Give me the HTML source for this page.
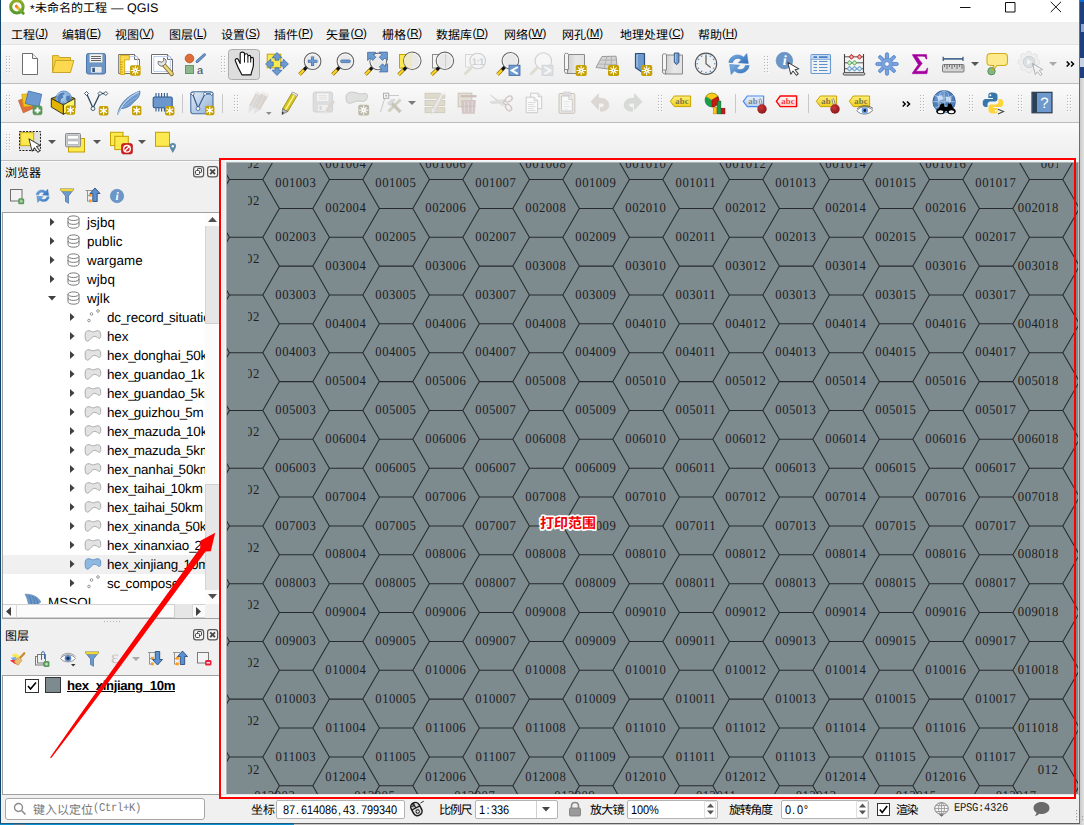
<!DOCTYPE html>
<html lang="zh"><head><meta charset="utf-8"><title>*未命名的工程 — QGIS</title>
<style>
html,body{margin:0;padding:0}
body{width:1084px;height:825px;overflow:hidden;position:relative;background:#f0f0f0;font-family:"Liberation Sans",sans-serif;text-rendering:geometricPrecision}
.a{position:absolute;box-sizing:border-box}
svg{overflow:visible}
.tb{left:1px;width:1078px;height:38px;background:linear-gradient(#fbfbfb,#f4f4f4 40%,#eeeeee)}
.ln{left:1px;width:1078px;height:2px;background:linear-gradient(#bdbdbd 1px,#f9f9f9 1px)}
.grip{width:4px;height:18px;background-image:radial-gradient(circle at 1px 1px,#b4b4b4 0.8px,transparent 1px);background-size:3px 3px}
.ss span{display:inline-block;width:6px;text-align:center}
u{text-decoration:underline;text-underline-offset:1px}
.cj{font-family:"Liberation Sans","Noto Sans CJK SC",sans-serif}
</style></head><body>

<div class="a" style="left:0px;top:0px;width:1px;height:825px;background:#14466d"></div>
<div class="a" style="left:0px;top:823px;width:1084px;height:2px;background:linear-gradient(#1c5c82 1px,#0a8fd0 1px)"></div>
<div class="a" style="left:294px;top:823px;width:786px;height:2px;background:linear-gradient(#5e5e5e 1px,#c6c6c6 1px)"></div>
<div class="a" style="left:13px;top:824px;width:12px;height:1px;background:#5a7a94"></div>
<div class="a" style="left:1080px;top:0px;width:4px;height:825px;background:linear-gradient(90deg,#cbcbcb,#e2e2e2)"></div>
<div class="a" style="left:1079px;top:0px;width:5px;height:78px;background:#1d3f7b"></div>
<div class="a" style="left:1079px;top:0px;width:5px;height:2px;background:#0f6ad2"></div>
<div class="a" style="left:1081px;top:24px;width:3px;height:8px;background:#8fa4c8"></div>
<div class="a" style="left:1080px;top:58px;width:4px;height:9px;background:#c8d2e4"></div>
<div class="a" style="left:1px;top:0px;width:1078px;height:823px;background:#f0f0f0"></div>
<div class="a" style="left:1px;top:0px;width:1078px;height:22px;background:#fff"></div>
<svg class="a" style="left:8px;top:-2px" width="18" height="18" viewBox="0 0 18 18"><defs><linearGradient id="qg" x1="0" y1="0" x2="0" y2="1"><stop offset="0" stop-color="#90ad28"/><stop offset="1" stop-color="#569a2e"/></linearGradient><linearGradient id="qt" x1="0" y1="0" x2="1" y2="1"><stop offset="0" stop-color="#f47a1a"/><stop offset=".35" stop-color="#f4c430"/><stop offset=".5" stop-color="#8ab82e"/><stop offset="1" stop-color="#4f962c"/></linearGradient></defs><circle cx="8.900" cy="8.800" r="6.200" fill="none" stroke="url(#qg)" stroke-width="3.100"/><path d="M8.300 8.200L15.200 15.200" stroke="url(#qt)" stroke-width="3" stroke-linecap="round"/></svg>
<div class="a" style="left:30px;top:0.50px;font:12px/17px 'Liberation Sans',sans-serif;color:#000;white-space:nowrap;letter-spacing:0px;">*</div>
<svg class="a" style="left:34.60px;top:-0.64px" width="74" height="16.6" viewBox="0 -12.80 74 16.6"><text class="cj" x="0" y="0" font-size="12" fill="#000">未命名的工程</text></svg>
<div class="a" style="left:111px;top:-1.00px;font:12.5px/18px 'Liberation Sans',sans-serif;color:#000;white-space:nowrap;letter-spacing:0px;">— QGIS</div>
<svg class="a" style="left:950px;top:0" width="120" height="22"><path d="M10 7.500H20.500 M55.500 2.500h9.500v9.500h-9.500z M100.700 1.800l10.300 10.300M111 1.800L100.700 12.100" stroke="#111" stroke-width="1" fill="none"/></svg>
<svg class="a" style="left:10.60px;top:25.96px" width="26" height="16.6" viewBox="0 -12.80 26 16.6"><text class="cj" x="0" y="0" font-size="12" fill="#000">工程</text></svg>
<div class="a" style="left:35.0px;top:26.30px;font:11.6px/16px 'Liberation Sans',sans-serif;color:#000;white-space:nowrap;letter-spacing:-0.2px;">(<u>J</u>)</div>
<svg class="a" style="left:61.60px;top:25.96px" width="26" height="16.6" viewBox="0 -12.80 26 16.6"><text class="cj" x="0" y="0" font-size="12" fill="#000">编辑</text></svg>
<div class="a" style="left:86.0px;top:26.30px;font:11.6px/16px 'Liberation Sans',sans-serif;color:#000;white-space:nowrap;letter-spacing:-0.2px;">(<u>E</u>)</div>
<svg class="a" style="left:114.60px;top:25.96px" width="26" height="16.6" viewBox="0 -12.80 26 16.6"><text class="cj" x="0" y="0" font-size="12" fill="#000">视图</text></svg>
<div class="a" style="left:139.0px;top:26.30px;font:11.6px/16px 'Liberation Sans',sans-serif;color:#000;white-space:nowrap;letter-spacing:-0.2px;">(<u>V</u>)</div>
<svg class="a" style="left:168.60px;top:25.96px" width="26" height="16.6" viewBox="0 -12.80 26 16.6"><text class="cj" x="0" y="0" font-size="12" fill="#000">图层</text></svg>
<div class="a" style="left:193.0px;top:26.30px;font:11.6px/16px 'Liberation Sans',sans-serif;color:#000;white-space:nowrap;letter-spacing:-0.2px;">(<u>L</u>)</div>
<svg class="a" style="left:220.60px;top:25.96px" width="26" height="16.6" viewBox="0 -12.80 26 16.6"><text class="cj" x="0" y="0" font-size="12" fill="#000">设置</text></svg>
<div class="a" style="left:245.0px;top:26.30px;font:11.6px/16px 'Liberation Sans',sans-serif;color:#000;white-space:nowrap;letter-spacing:-0.2px;">(<u>S</u>)</div>
<svg class="a" style="left:273.60px;top:25.96px" width="26" height="16.6" viewBox="0 -12.80 26 16.6"><text class="cj" x="0" y="0" font-size="12" fill="#000">插件</text></svg>
<div class="a" style="left:298.0px;top:26.30px;font:11.6px/16px 'Liberation Sans',sans-serif;color:#000;white-space:nowrap;letter-spacing:-0.2px;">(<u>P</u>)</div>
<svg class="a" style="left:326.10px;top:25.96px" width="26" height="16.6" viewBox="0 -12.80 26 16.6"><text class="cj" x="0" y="0" font-size="12" fill="#000">矢量</text></svg>
<div class="a" style="left:350.5px;top:26.30px;font:11.6px/16px 'Liberation Sans',sans-serif;color:#000;white-space:nowrap;letter-spacing:-0.2px;">(<u>O</u>)</div>
<svg class="a" style="left:382.10px;top:25.96px" width="26" height="16.6" viewBox="0 -12.80 26 16.6"><text class="cj" x="0" y="0" font-size="12" fill="#000">栅格</text></svg>
<div class="a" style="left:406.5px;top:26.30px;font:11.6px/16px 'Liberation Sans',sans-serif;color:#000;white-space:nowrap;letter-spacing:-0.2px;">(<u>R</u>)</div>
<svg class="a" style="left:436.10px;top:25.96px" width="38" height="16.6" viewBox="0 -12.80 38 16.6"><text class="cj" x="0" y="0" font-size="12" fill="#000">数据库</text></svg>
<div class="a" style="left:472.5px;top:26.30px;font:11.6px/16px 'Liberation Sans',sans-serif;color:#000;white-space:nowrap;letter-spacing:-0.2px;">(<u>D</u>)</div>
<svg class="a" style="left:503.60px;top:25.96px" width="26" height="16.6" viewBox="0 -12.80 26 16.6"><text class="cj" x="0" y="0" font-size="12" fill="#000">网络</text></svg>
<div class="a" style="left:528.0px;top:26.30px;font:11.6px/16px 'Liberation Sans',sans-serif;color:#000;white-space:nowrap;letter-spacing:-0.2px;">(<u>W</u>)</div>
<svg class="a" style="left:561.60px;top:25.96px" width="26" height="16.6" viewBox="0 -12.80 26 16.6"><text class="cj" x="0" y="0" font-size="12" fill="#000">网孔</text></svg>
<div class="a" style="left:586.0px;top:26.30px;font:11.6px/16px 'Liberation Sans',sans-serif;color:#000;white-space:nowrap;letter-spacing:-0.2px;">(<u>M</u>)</div>
<svg class="a" style="left:620.10px;top:25.96px" width="50" height="16.6" viewBox="0 -12.80 50 16.6"><text class="cj" x="0" y="0" font-size="12" fill="#000">地理处理</text></svg>
<div class="a" style="left:668.5px;top:26.30px;font:11.6px/16px 'Liberation Sans',sans-serif;color:#000;white-space:nowrap;letter-spacing:-0.2px;">(<u>C</u>)</div>
<svg class="a" style="left:697.60px;top:25.96px" width="26" height="16.6" viewBox="0 -12.80 26 16.6"><text class="cj" x="0" y="0" font-size="12" fill="#000">帮助</text></svg>
<div class="a" style="left:722.0px;top:26.30px;font:11.6px/16px 'Liberation Sans',sans-serif;color:#000;white-space:nowrap;letter-spacing:-0.2px;">(<u>H</u>)</div>
<div class="a" style="left:1px;top:44px;width:1078px;height:1px;background:#e2e2e2"></div>
<div class="a tb" style="top:45px;height:38px"></div>
<div class="a tb" style="top:84px;height:38px"></div>
<div class="a tb" style="top:123px;height:37px"></div>
<div class="a ln" style="top:83px"></div>
<div class="a ln" style="top:122px"></div>
<div class="a ln" style="top:160px"></div>
<svg class="a" style="left:6px;top:56px" width="5" height="19"><path d="M1 1h1v1h-1zM1 4h1v1h-1zM1 7h1v1h-1zM1 10h1v1h-1zM1 13h1v1h-1zM1 16h1v1h-1zM4 1h1v1h-1zM4 4h1v1h-1zM4 7h1v1h-1zM4 10h1v1h-1zM4 13h1v1h-1zM4 16h1v1h-1z" fill="#fff"/><path d="M0 0h1v1h-1zM0 3h1v1h-1zM0 6h1v1h-1zM0 9h1v1h-1zM0 12h1v1h-1zM0 15h1v1h-1zM3 0h1v1h-1zM3 3h1v1h-1zM3 6h1v1h-1zM3 9h1v1h-1zM3 12h1v1h-1zM3 15h1v1h-1z" fill="#b6b6b6"/></svg>
<svg class="a" style="left:18px;top:52px" width="24" height="24" viewBox="0 0 24 24"><path d="M4.500 1.500H14.500L19.500 6.500V22.500H4.500Z" fill="#fff" stroke="#6e6e6e"/><path d="M14.500 1.500V6.500H19.500" fill="#f0f0f0" stroke="#6e6e6e"/></svg>
<svg class="a" style="left:51px;top:52px" width="24" height="24" viewBox="0 0 24 24"><path d="M1.500 20.500V3.600H7.500L8.500 5.500H19.500V8.500" fill="#f5cf3e" stroke="#c9a52a"/><path d="M1.500 20.500L4.500 8.500H22.800L19.500 20.500Z" fill="#fdd94f" stroke="#c9a52a"/></svg>
<svg class="a" style="left:84px;top:52px" width="24" height="24" viewBox="0 0 24 24"><rect x="2.500" y="1.500" width="19" height="20.500" rx="2" fill="#6c96c8" stroke="#4a74a8"/><rect x="5.500" y="2" width="13" height="8.500" fill="#f2f2f2" stroke="#9ab" stroke-width=".5"/><path d="M7 4.500H17M7 6.500H17M7 8.500H17" stroke="#555" stroke-width=".9"/><rect x="6.500" y="14.500" width="11.500" height="6.500" fill="#e8e8e8" stroke="#5580b5" stroke-width=".6"/><rect x="8.300" y="15.800" width="2.600" height="4.200" fill="#2f5487"/></svg>
<svg class="a" style="left:117px;top:52px" width="24" height="24" viewBox="0 0 24 24"><path d="M1.700 2.500H17.500L22.500 7.500V21.500H1.700Z" fill="#fff" stroke="#6e6e6e"/><path d="M17.500 2.500V7.500H22.500" fill="#f4f4f4" stroke="#6e6e6e"/><rect x="4" y="4.500" width="16.500" height="15" fill="none" stroke="#b8c8f0" stroke-width=".8"/><path d="M3.200 3.300H12.300V7.800H7.700V22.500H3.200Z" fill="#fcd94f" stroke="#d1a800" stroke-width=".9"/><path d="M3.500 10h2.500M3.500 12.500h1.700M3.500 15h2.500M3.500 17.500h1.700M3.500 20h2.500" stroke="#b89400" stroke-width=".8"/><rect x="13" y="13.2" width="10.600" height="10.600" rx="1.800" fill="#c4a000"/><path d="M18.30 18.50L22.50 18.50M18.30 18.50L18.30 22.70M18.30 18.50L14.10 18.50M18.30 18.50L18.30 14.30" stroke="#fff" stroke-width="1" stroke-linecap="round"/><path d="M18.30 18.50L20.85 21.05M18.30 18.50L15.75 21.05M18.30 18.50L15.75 15.95M18.30 18.50L20.85 15.95" stroke="#fff" stroke-width="1.100" stroke-linecap="round"/><circle cx="18.3" cy="18.5" r="2" fill="#fff"/><circle cx="18.3" cy="18.5" r=".7" fill="#c4a000"/></svg>
<svg class="a" style="left:150px;top:52px" width="24" height="24" viewBox="0 0 24 24"><path d="M1.500 2.500H17.500L22.500 7.500V21.500H1.500Z" fill="#fff" stroke="#6e6e6e"/><path d="M17.500 2.500V7.500H22.500" fill="#f4f4f4" stroke="#6e6e6e"/><rect x="3.800" y="4.500" width="16.500" height="15" fill="none" stroke="#b8c8f0" stroke-width=".9"/><path d="M13.500 12.500L21.800 22" stroke="#8a7430" stroke-width="4.200" stroke-linecap="round"/><path d="M14 13L21.600 21.700" stroke="#ecd67c" stroke-width="2.600" stroke-linecap="round"/><path d="M8.300 9.200a3.600 3.600 0 0 0 5.800 4l1.600-1.800a3.600 3.600 0 0 0-2.200-5.400l.3 2.600-2 1.600-2.200-.6Z" fill="#e4e4e4" stroke="#666" stroke-width=".9"/></svg>
<svg class="a" style="left:183px;top:52px" width="24" height="24" viewBox="0 0 24 24"><circle cx="6.500" cy="6.500" r="4.300" fill="#df6d3a" stroke="#b0501f" stroke-width=".8"/><path d="M14 9.600L21.500 2.800" stroke="#41699b" stroke-width="2.800" stroke-linecap="round"/><path d="M14 9.600L21.500 2.800" stroke="#6d9bd1" stroke-width="1.500" stroke-linecap="round"/><rect x="2.500" y="13.500" width="8" height="8" fill="#8fb78f" stroke="#5f9a5f"/><text x="14" y="21.700" font-family="'Liberation Sans',sans-serif" font-size="11" fill="#444">a</text></svg>
<svg class="a" style="left:221px;top:56px" width="5" height="19"><path d="M1 1h1v1h-1zM1 4h1v1h-1zM1 7h1v1h-1zM1 10h1v1h-1zM1 13h1v1h-1zM1 16h1v1h-1zM4 1h1v1h-1zM4 4h1v1h-1zM4 7h1v1h-1zM4 10h1v1h-1zM4 13h1v1h-1zM4 16h1v1h-1z" fill="#fff"/><path d="M0 0h1v1h-1zM0 3h1v1h-1zM0 6h1v1h-1zM0 9h1v1h-1zM0 12h1v1h-1zM0 15h1v1h-1zM3 0h1v1h-1zM3 3h1v1h-1zM3 6h1v1h-1zM3 9h1v1h-1zM3 12h1v1h-1zM3 15h1v1h-1z" fill="#b6b6b6"/></svg>
<div class="a" style="left:228px;top:49px;width:32px;height:31px;background:#dddddd;border:1px solid #adadad;border-radius:3.500px"></div>
<svg class="a" style="left:232px;top:52px" width="24" height="24" viewBox="0 0 24 24"><path d="M9.900 22.800H19C19.500 19 21.400 16 21.400 13V6.800C21.400 4.900 18.700 4.900 18.700 6.800V5C18.700 2.800 15.900 2.800 15.900 4.800V3.400C15.900 1.200 12.500 1.200 12.500 3.400V1.800C12.500 -.4 8.200 -.4 8.200 1.800V11.500L6.300 7.800C5.300 5.800 2.500 6.800 3.400 9 5 13.500 7.500 18.500 9.900 22.800Z" fill="#fff" stroke="#111" stroke-width="1.150" stroke-linejoin="round"/><path d="M12.500 3.400V10.500M15.900 4.800V10.800M18.700 6.800V10.500" stroke="#111" stroke-width="1"/></svg>
<svg class="a" style="left:265px;top:52px" width="24" height="24" viewBox="0 0 24 24"><rect x="2.200" y="2.200" width="13.600" height="13.600" fill="#fce94f" stroke="#c9a300"/><path transform="rotate(0 12 12)" d="M12 .6L17 5.800H14V8.200H10V5.800H7Z" fill="#6d9bd1" stroke="#3f6ea8" stroke-width=".8" stroke-linejoin="round"/><path transform="rotate(90 12 12)" d="M12 .6L17 5.800H14V8.200H10V5.800H7Z" fill="#6d9bd1" stroke="#3f6ea8" stroke-width=".8" stroke-linejoin="round"/><path transform="rotate(180 12 12)" d="M12 .6L17 5.800H14V8.200H10V5.800H7Z" fill="#6d9bd1" stroke="#3f6ea8" stroke-width=".8" stroke-linejoin="round"/><path transform="rotate(270 12 12)" d="M12 .6L17 5.800H14V8.200H10V5.800H7Z" fill="#6d9bd1" stroke="#3f6ea8" stroke-width=".8" stroke-linejoin="round"/></svg>
<svg class="a" style="left:298px;top:52px" width="24" height="24" viewBox="0 0 24 24"><path d="M6.900 16.900L1.500 22.500" stroke="#8d6e00" stroke-width="3.600"/><path d="M6.900 16.900L1.500 22.500" stroke="#fcd42b" stroke-width="2.200"/><path d="M8.300 15.500L6.900 16.900" stroke="#111" stroke-width="3.200" stroke-linecap="round"/><circle cx="14.6" cy="9.2" r="8.3" fill="#e9e9e9" stroke="#666" stroke-width="1.100"/><circle cx="14.6" cy="9.2" r="7.1000000000000005" fill="none" stroke="#fff" stroke-width=".9" opacity=".75"/><path d="M14.600 4.500V14M9.800 9.200H19.400" stroke="#3f6ea8" stroke-width="3"/><path d="M14.600 5V13.500M10.300 9.200H18.900" stroke="#6d9bd1" stroke-width="1.800"/></svg>
<svg class="a" style="left:331px;top:52px" width="24" height="24" viewBox="0 0 24 24"><path d="M6.900 16.900L1.500 22.500" stroke="#8d6e00" stroke-width="3.600"/><path d="M6.900 16.900L1.500 22.500" stroke="#fcd42b" stroke-width="2.200"/><path d="M8.300 15.500L6.900 16.900" stroke="#111" stroke-width="3.200" stroke-linecap="round"/><circle cx="14.4" cy="9.2" r="8.3" fill="#e9e9e9" stroke="#666" stroke-width="1.100"/><circle cx="14.4" cy="9.2" r="7.1000000000000005" fill="none" stroke="#fff" stroke-width=".9" opacity=".75"/><rect x="9.700" y="8" width="9.600" height="2.600" rx="1" fill="#6d9bd1" stroke="#3f6ea8" stroke-width=".8"/></svg>
<svg class="a" style="left:364px;top:52px" width="24" height="24" viewBox="0 0 24 24"><path d="M6.900 16.900L1.500 22.500" stroke="#8d6e00" stroke-width="3.600"/><path d="M6.900 16.900L1.500 22.500" stroke="#fcd42b" stroke-width="2.200"/><path d="M8.300 15.500L6.900 16.900" stroke="#111" stroke-width="3.200" stroke-linecap="round"/><circle cx="14.2" cy="9.4" r="8.3" fill="#e9e9e9" stroke="#666" stroke-width="1.100"/><circle cx="14.2" cy="9.4" r="7.1000000000000005" fill="none" stroke="#fff" stroke-width=".9" opacity=".75"/><path transform="rotate(0 13.600 10.100)" d="M3.600 .3H11.800L9.400 2.700 11.900 5.200 8.700 8.400 6.200 5.900 3.600 8.500Z" fill="#6d9bd1" stroke="#3f6ea8" stroke-width=".8" stroke-linejoin="round"/><path transform="rotate(90 13.600 10.100)" d="M3.600 .3H11.800L9.400 2.700 11.900 5.200 8.700 8.400 6.200 5.900 3.600 8.500Z" fill="#6d9bd1" stroke="#3f6ea8" stroke-width=".8" stroke-linejoin="round"/><path transform="rotate(180 13.600 10.100)" d="M3.600 .3H11.800L9.400 2.700 11.900 5.200 8.700 8.400 6.200 5.900 3.600 8.500Z" fill="#6d9bd1" stroke="#3f6ea8" stroke-width=".8" stroke-linejoin="round"/></svg>
<svg class="a" style="left:397px;top:52px" width="24" height="24" viewBox="0 0 24 24"><rect x="2.500" y="2.500" width="8" height="13.500" fill="#fce94f" stroke="#c9a300"/><path d="M7.500 17.0L1.500 22.800" stroke="#8d6e00" stroke-width="3.600"/><path d="M7.500 17.0L1.500 22.800" stroke="#fcd42b" stroke-width="2.200"/><path d="M9 15.600L7.500 17.0" stroke="#111" stroke-width="3.200" stroke-linecap="round"/><circle cx="15.3" cy="8.8" r="8.7" fill="#e9e9e9" stroke="#666" stroke-width="1.100"/><circle cx="15.3" cy="8.8" r="7.499999999999999" fill="none" stroke="#fff" stroke-width=".9" opacity=".75"/><path d="M15.300 .5A8.300 8.300 0 0 0 15.300 17.100Z" fill="#eee8c4" opacity=".85"/></svg>
<svg class="a" style="left:430px;top:52px" width="24" height="24" viewBox="0 0 24 24"><rect x="2.500" y="2.500" width="8" height="13.500" fill="#f4f4f4" stroke="#8a8a8a"/><path d="M7.500 17.0L1.500 22.800" stroke="#8d6e00" stroke-width="3.600"/><path d="M7.500 17.0L1.500 22.800" stroke="#fcd42b" stroke-width="2.200"/><path d="M9 15.600L7.500 17.0" stroke="#111" stroke-width="3.200" stroke-linecap="round"/><circle cx="14.9" cy="8.8" r="8.7" fill="#e9e9e9" stroke="#666" stroke-width="1.100"/><circle cx="14.9" cy="8.8" r="7.499999999999999" fill="none" stroke="#fff" stroke-width=".9" opacity=".75"/><path d="M15.600 1.500V16" stroke="#c4c4c4" stroke-width=".8"/></svg>
<svg class="a" style="left:463px;top:52px" width="24" height="24" viewBox="0 0 24 24"><rect x="2.500" y="2.500" width="8" height="12.500" fill="#f6f6f6" stroke="#d8d8d8"/><path d="M8.500 15.600L1.500 22.500" stroke="#dddbd2" stroke-width="3"/><circle cx="14.7" cy="9" r="7.8" fill="#f4f4f4" stroke="#cfcfcf" stroke-width="1.100"/><text x="14.700" y="12.600" text-anchor="middle" font-family="'Liberation Sans',sans-serif" font-weight="bold" font-size="9.500" fill="#d0d0d0" letter-spacing="-.6">1:1</text></svg>
<svg class="a" style="left:496px;top:52px" width="24" height="24" viewBox="0 0 24 24"><path d="M6.900 16.900L1.500 22.500" stroke="#8d6e00" stroke-width="3.600"/><path d="M6.900 16.900L1.500 22.500" stroke="#fcd42b" stroke-width="2.200"/><path d="M8.300 15.500L6.900 16.900" stroke="#111" stroke-width="3.200" stroke-linecap="round"/><circle cx="14.4" cy="8.8" r="8.3" fill="#e9e9e9" stroke="#666" stroke-width="1.100"/><circle cx="14.4" cy="8.8" r="7.1000000000000005" fill="none" stroke="#fff" stroke-width=".9" opacity=".75"/><rect x="13" y="13.200" width="11" height="10.300" fill="#6d9bd1" stroke="#41699b" stroke-width=".8"/><path d="M21.800 15L15.800 18.400 21.800 21.800" fill="none" stroke="#fff" stroke-width="2"/></svg>
<svg class="a" style="left:529px;top:52px" width="24" height="24" viewBox="0 0 24 24"><path d="M8.300 15.500L1.500 22.500" stroke="#dddbd2" stroke-width="3"/><circle cx="14.3" cy="9" r="8.2" fill="#f6f6f6" stroke="#cfcfcf" stroke-width="1.100"/><rect x="13" y="13.200" width="11" height="10.300" fill="#dcdfe2" stroke="#cfd2d4" stroke-width=".8"/><path d="M15.500 15L21.500 18.400 15.500 21.800" fill="none" stroke="#f6f6f6" stroke-width="2"/></svg>
<svg width="0" height="0" style="position:absolute"><defs><linearGradient id="gp" x1="0" x2="1" y1="0" y2="0"><stop offset="0" stop-color="#cfcfcf"/><stop offset=".5" stop-color="#e8e8e8"/><stop offset="1" stop-color="#e2e2e2"/></linearGradient><linearGradient id="gy" x1="0" x2="0" y1="0" y2="1"><stop offset="0" stop-color="#fdf07a"/><stop offset="1" stop-color="#f0cf1a"/></linearGradient><linearGradient id="gb" x1="0" x2="0" y1="0" y2="1"><stop offset="0" stop-color="#eaf2fc"/><stop offset="1" stop-color="#b8d0f0"/></linearGradient><linearGradient id="gr" x1="0" x2="0" y1="0" y2="1"><stop offset="0" stop-color="#fff"/><stop offset="1" stop-color="#ffc8c8"/></linearGradient><linearGradient id="gv" x1="0" x2="1" y1="0" y2="1"><stop offset="0" stop-color="#e4ecf6"/><stop offset="1" stop-color="#8fb0d8"/></linearGradient><radialGradient id="gball" cx=".4" cy=".35" r=".7"><stop offset="0" stop-color="#c83a3a"/><stop offset="1" stop-color="#8a1414"/></radialGradient><linearGradient id="grf" x1="0" x2="1" y1="0" y2="1"><stop offset="0" stop-color="#7fb0e4"/><stop offset="1" stop-color="#2f6db8"/></linearGradient></defs></svg>
<svg class="a" style="left:563px;top:52px" width="24" height="24" viewBox="0 0 24 24"><path d="M4.500 2.500H21.500V21.500H4.500Z" fill="url(#gp)" stroke="#8a8a8a"/><path d="M1.500 2.500C1.500 .8 5.500 .8 5.500 2.500V17.500H1.500Z" fill="#f4f4f4" stroke="#8a8a8a"/><path d="M1.500 17.500V19.500C1.500 21.300 4 21.500 5.500 21.500" fill="none" stroke="#8a8a8a"/><rect x="12.7" y="13" width="11" height="11" rx="1.800" fill="#c4a000"/><path d="M18.20 18.50L22.60 18.50M18.20 18.50L18.20 22.90M18.20 18.50L13.80 18.50M18.20 18.50L18.20 14.10" stroke="#fff" stroke-width="1" stroke-linecap="round"/><path d="M18.20 18.50L20.89 21.19M18.20 18.50L15.51 21.19M18.20 18.50L15.51 15.81M18.20 18.50L20.89 15.81" stroke="#fff" stroke-width="1.100" stroke-linecap="round"/><circle cx="18.2" cy="18.5" r="2" fill="#fff"/><circle cx="18.2" cy="18.5" r=".7" fill="#c4a000"/></svg>
<svg class="a" style="left:595px;top:52px" width="24" height="24" viewBox="0 0 24 24"><path d="M7 4.500L21 4.200 22.500 18 1 15.500Z" fill="#d4d4d4" stroke="#9a9a9a"/><path d="M12 4.400L9 16.400M16.500 4.300L16 17.200M4.800 8.200L21.400 8M3 12L22 12.600" stroke="#a8a8a8" stroke-width=".8"/><rect x="13" y="13" width="11" height="11" rx="1.800" fill="#c4a000"/><path d="M18.50 18.50L22.90 18.50M18.50 18.50L18.50 22.90M18.50 18.50L14.10 18.50M18.50 18.50L18.50 14.10" stroke="#fff" stroke-width="1" stroke-linecap="round"/><path d="M18.50 18.50L21.19 21.19M18.50 18.50L15.81 21.19M18.50 18.50L15.81 15.81M18.50 18.50L21.19 15.81" stroke="#fff" stroke-width="1.100" stroke-linecap="round"/><circle cx="18.5" cy="18.5" r="2" fill="#fff"/><circle cx="18.5" cy="18.5" r=".7" fill="#c4a000"/></svg>
<svg class="a" style="left:628px;top:52px" width="24" height="24" viewBox="0 0 24 24"><path d="M7.500 1.500H16.500V21.800L7.500 15.800Z" fill="#6d99cc" stroke="#2d4f7c" stroke-width="1.200" stroke-linejoin="round"/><path d="M9 2.500V15" stroke="#a8c8ec" stroke-width="1.200"/><rect x="13.2" y="13" width="11" height="11" rx="1.800" fill="#c4a000"/><path d="M18.70 18.50L23.10 18.50M18.70 18.50L18.70 22.90M18.70 18.50L14.30 18.50M18.70 18.50L18.70 14.10" stroke="#fff" stroke-width="1" stroke-linecap="round"/><path d="M18.70 18.50L21.39 21.19M18.70 18.50L16.01 21.19M18.70 18.50L16.01 15.81M18.70 18.50L21.39 15.81" stroke="#fff" stroke-width="1.100" stroke-linecap="round"/><circle cx="18.7" cy="18.5" r="2" fill="#fff"/><circle cx="18.7" cy="18.5" r=".7" fill="#c4a000"/></svg>
<svg class="a" style="left:661px;top:52px" width="24" height="24" viewBox="0 0 24 24"><g transform="translate(0,.5)"><path d="M4.500 2.500H21.500V21.500H4.500Z" fill="url(#gp)" stroke="#8a8a8a"/><path d="M1.500 2.500C1.500 .8 5.500 .8 5.500 2.500V17.500H1.500Z" fill="#f4f4f4" stroke="#8a8a8a"/><path d="M1.500 17.500V19.500C1.500 21.300 4 21.500 5.500 21.500" fill="none" stroke="#8a8a8a"/></g><path d="M13.300 1V10.500L15.600 12.600 17.900 10.500V1Z" fill="#6d99cc" stroke="#2d4f7c" stroke-width=".9"/><path d="M14.700 1.800V10" stroke="#b0ccec" stroke-width="1"/></svg>
<svg class="a" style="left:694px;top:52px" width="24" height="24" viewBox="0 0 24 24"><circle cx="12" cy="11.800" r="10.700" fill="#f0f0f0" stroke="#555" stroke-width="1.100"/><circle cx="20.80" cy="11.80" r=".8" fill="#5a8fd0"/><circle cx="19.62" cy="16.20" r=".8" fill="#5a8fd0"/><circle cx="16.40" cy="19.42" r=".8" fill="#5a8fd0"/><circle cx="12.00" cy="20.60" r=".8" fill="#5a8fd0"/><circle cx="7.60" cy="19.42" r=".8" fill="#5a8fd0"/><circle cx="4.38" cy="16.20" r=".8" fill="#5a8fd0"/><circle cx="3.20" cy="11.80" r=".8" fill="#5a8fd0"/><circle cx="4.38" cy="7.40" r=".8" fill="#5a8fd0"/><circle cx="7.60" cy="4.18" r=".8" fill="#5a8fd0"/><circle cx="12.00" cy="3.00" r=".8" fill="#5a8fd0"/><circle cx="16.40" cy="4.18" r=".8" fill="#5a8fd0"/><circle cx="19.62" cy="7.40" r=".8" fill="#5a8fd0"/><path d="M12 3.500V11.800L16.600 15.600" fill="none" stroke="#666" stroke-width="1.300"/></svg>
<svg class="a" style="left:727px;top:52px" width="24" height="24" viewBox="0 0 24 24"><path d="M1.800 10.500C2.500 3.500 11.500 .5 16.500 5.200L19.800 1.500 21.300 11.500 11.300 10.800 14.300 7.800C11 4.800 6 7 5.800 10.500Z" fill="url(#grf)" stroke="#3a78c0" stroke-width=".5"/><path d="M22.200 13.500C21.500 20.500 12.500 23.500 7.500 18.800L4.200 22.500 2.700 12.500 12.700 13.200 9.700 16.200C13 19.200 18 17 18.200 13.500Z" fill="url(#grf)" stroke="#3a78c0" stroke-width=".5"/></svg>
<svg class="a" style="left:764px;top:56px" width="5" height="19"><path d="M1 1h1v1h-1zM1 4h1v1h-1zM1 7h1v1h-1zM1 10h1v1h-1zM1 13h1v1h-1zM1 16h1v1h-1zM4 1h1v1h-1zM4 4h1v1h-1zM4 7h1v1h-1zM4 10h1v1h-1zM4 13h1v1h-1zM4 16h1v1h-1z" fill="#fff"/><path d="M0 0h1v1h-1zM0 3h1v1h-1zM0 6h1v1h-1zM0 9h1v1h-1zM0 12h1v1h-1zM0 15h1v1h-1zM3 0h1v1h-1zM3 3h1v1h-1zM3 6h1v1h-1zM3 9h1v1h-1zM3 12h1v1h-1zM3 15h1v1h-1z" fill="#b6b6b6"/></svg>
<svg class="a" style="left:776px;top:52px" width="24" height="24" viewBox="0 0 24 24"><circle cx="8.400" cy="8.600" r="8.300" fill="#6b96c8" stroke="#5a86b8" stroke-width=".6"/><text x="8.600" y="13.300" text-anchor="middle" font-family="'Liberation Serif',serif" font-style="italic" font-weight="bold" font-size="14" fill="#fff">i</text><g transform="translate(11.800,10.300) rotate(-14) scale(.92)"><path d="M0 0V13.500L3.200 10.600 5.600 16 8 15 5.600 9.800H10Z" fill="#fff" stroke="#333" stroke-width="1" stroke-linejoin="round"/></g></svg>
<svg class="a" style="left:809px;top:52px" width="24" height="24" viewBox="0 0 24 24"><rect x="2" y="2.500" width="19.500" height="19" rx="1" fill="#f2f2f2" stroke="#6a9ad4" stroke-width="1.100"/><rect x="2.500" y="3" width="18.500" height="4.200" fill="#c5dbf2"/><path d="M4.500 5.200H8M10 5.200H18.500" stroke="#4a7fc0" stroke-width="1.700"/><path d="M2 7.400H21.500" stroke="#6a9ad4" stroke-width=".8"/><path d="M4.500 9.500H8M10 9.500H18.500" stroke="#5a8fd0" stroke-width="1.200"/><path d="M4.500 12.500H8M10 12.500H18.500" stroke="#5a8fd0" stroke-width="1.200"/><path d="M4.500 15.500H8M10 15.500H18.500" stroke="#5a8fd0" stroke-width="1.200"/><path d="M4.500 18.500H8M10 18.500H18.500" stroke="#5a8fd0" stroke-width="1.200"/></svg>
<svg class="a" style="left:842px;top:52px" width="24" height="24" viewBox="0 0 24 24"><path d="M2.500 2V21M21.500 2V21" stroke="#444" stroke-width="1.100"/><path d="M2.500 4.800H21.500M2.500 10.800H21.500M2.500 16.700H21.500" stroke="#444" stroke-width=".9"/><rect x="1.200" y="20.700" width="21.600" height="2.300" rx="1" fill="#e8e8e8" stroke="#444"/><path d="M9.500 2.300L12.0 4.800L9.500 7.300L7.0 4.800Z" fill="#e06a6a" stroke="#c02020" stroke-width=".8"/><circle cx="9.5" cy="4.8" r=".9" fill="#fff" opacity=".7"/><path d="M17.500 2.300L20.0 4.800L17.500 7.300L15.0 4.800Z" fill="#e06a6a" stroke="#c02020" stroke-width=".8"/><circle cx="17.5" cy="4.8" r=".9" fill="#fff" opacity=".7"/><path d="M7.500 8.300L10.0 10.800L7.500 13.300L5.0 10.800Z" fill="#a6d8a6" stroke="#4aa04a" stroke-width=".8"/><circle cx="7.5" cy="10.8" r=".9" fill="#fff" opacity=".7"/><path d="M12.500 8.300L15.0 10.800L12.500 13.300L10.0 10.800Z" fill="#a6d8a6" stroke="#4aa04a" stroke-width=".8"/><circle cx="12.5" cy="10.8" r=".9" fill="#fff" opacity=".7"/><path d="M7.500 14.200L10.0 16.700L7.500 19.200L5.0 16.700Z" fill="#a8cce8" stroke="#4a86c0" stroke-width=".8"/><circle cx="7.5" cy="16.7" r=".9" fill="#fff" opacity=".7"/><path d="M12.500 14.200L15.0 16.700L12.500 19.200L10.0 16.700Z" fill="#a8cce8" stroke="#4a86c0" stroke-width=".8"/><circle cx="12.5" cy="16.7" r=".9" fill="#fff" opacity=".7"/><path d="M17.500 14.200L20.0 16.700L17.500 19.200L15.0 16.700Z" fill="#a8cce8" stroke="#4a86c0" stroke-width=".8"/><circle cx="17.5" cy="16.7" r=".9" fill="#fff" opacity=".7"/></svg>
<svg class="a" style="left:875px;top:52px" width="24" height="24" viewBox="0 0 24 24"><rect transform="rotate(0 12 12)" x="10.400" y=".7" width="3.200" height="7.500" rx="1.600" fill="#7aa2dc" stroke="#4a7fc9" stroke-width=".8"/><rect transform="rotate(45 12 12)" x="10.400" y=".7" width="3.200" height="7.500" rx="1.600" fill="#7aa2dc" stroke="#4a7fc9" stroke-width=".8"/><rect transform="rotate(90 12 12)" x="10.400" y=".7" width="3.200" height="7.500" rx="1.600" fill="#7aa2dc" stroke="#4a7fc9" stroke-width=".8"/><rect transform="rotate(135 12 12)" x="10.400" y=".7" width="3.200" height="7.500" rx="1.600" fill="#7aa2dc" stroke="#4a7fc9" stroke-width=".8"/><rect transform="rotate(180 12 12)" x="10.400" y=".7" width="3.200" height="7.500" rx="1.600" fill="#7aa2dc" stroke="#4a7fc9" stroke-width=".8"/><rect transform="rotate(225 12 12)" x="10.400" y=".7" width="3.200" height="7.500" rx="1.600" fill="#7aa2dc" stroke="#4a7fc9" stroke-width=".8"/><rect transform="rotate(270 12 12)" x="10.400" y=".7" width="3.200" height="7.500" rx="1.600" fill="#7aa2dc" stroke="#4a7fc9" stroke-width=".8"/><rect transform="rotate(315 12 12)" x="10.400" y=".7" width="3.200" height="7.500" rx="1.600" fill="#7aa2dc" stroke="#4a7fc9" stroke-width=".8"/><circle cx="12" cy="12" r="5.700" fill="#7aa2dc" stroke="#4a7fc9" stroke-width=".5"/><circle cx="12" cy="12" r="5.300" fill="#7aa2dc"/><circle cx="12" cy="12" r="2.300" fill="#fff" stroke="#4a7fc9" stroke-width=".7"/></svg>
<svg class="a" style="left:908px;top:52px" width="24" height="24" viewBox="0 0 24 24"><path d="M4.500 2.500H18.500L19 7H18C17.600 4.800 16.800 4.200 14.500 4.200H8.800L14.200 11.500 8 19.300H15C17.500 19.300 18.500 18.500 19 16.200H19.800L19 21.700H4.300V21L10.300 12.500 4.500 3.200Z" fill="#a4009e" stroke="#a4009e" stroke-width=".5"/></svg>
<svg class="a" style="left:941px;top:52px" width="24" height="24" viewBox="0 0 24 24"><path d="M2.200 6.900H22" stroke="#2f567f" stroke-width="1.500"/><path d="M2.200 4.800V9M22 4.800V9" stroke="#2f567f" stroke-width="1.200"/><rect x="1.500" y="12.500" width="21.500" height="7.500" rx="1" fill="#d2d2d2" stroke="#7a7a7a"/><path d="M3.500 12.500V15" stroke="#666" stroke-width=".9"/><path d="M6 12.500V17" stroke="#666" stroke-width=".9"/><path d="M8.500 12.500V15" stroke="#666" stroke-width=".9"/><path d="M11 12.500V17" stroke="#666" stroke-width=".9"/><path d="M13.500 12.500V15" stroke="#666" stroke-width=".9"/><path d="M16 12.500V17" stroke="#666" stroke-width=".9"/><path d="M18.500 12.500V15" stroke="#666" stroke-width=".9"/><path d="M21 12.500V17" stroke="#666" stroke-width=".9"/></svg>
<svg class="a" style="left:971px;top:62px" width="8" height="4"><path d="M0 0H8L4 4Z" fill="#555"/></svg>
<svg class="a" style="left:985px;top:52px" width="24" height="24" viewBox="0 0 24 24"><path d="M5.500 1.500H19Q22.500 1.500 22.500 5V10Q22.500 13.500 19 13.500H12L7.500 19 8.500 13.500H5.500Q2 13.500 2 10V5Q2 1.500 5.500 1.500Z" fill="#fceb8d" stroke="#d4ac1a" stroke-width="1.100"/><circle cx="6.500" cy="19.200" r="3.700" fill="#7fb97f" stroke="#5d8f5d" stroke-width="1"/><path d="M7 18.800L9 14" stroke="#d4ac1a" stroke-width="1"/></svg>
<svg class="a" style="left:1018px;top:52px" width="24" height="24" viewBox="0 0 24 24"><circle cx="19.20" cy="10.00" r="2.600" fill="#efefef" stroke="#dedede" stroke-width=".8"/><circle cx="16.80" cy="15.80" r="2.600" fill="#efefef" stroke="#dedede" stroke-width=".8"/><circle cx="11.00" cy="18.20" r="2.600" fill="#efefef" stroke="#dedede" stroke-width=".8"/><circle cx="5.20" cy="15.80" r="2.600" fill="#efefef" stroke="#dedede" stroke-width=".8"/><circle cx="2.80" cy="10.00" r="2.600" fill="#efefef" stroke="#dedede" stroke-width=".8"/><circle cx="5.20" cy="4.20" r="2.600" fill="#efefef" stroke="#dedede" stroke-width=".8"/><circle cx="11.00" cy="1.80" r="2.600" fill="#efefef" stroke="#dedede" stroke-width=".8"/><circle cx="16.80" cy="4.20" r="2.600" fill="#efefef" stroke="#dedede" stroke-width=".8"/><circle cx="11" cy="10" r="8" fill="#efefef"/><circle cx="11" cy="10" r="5.800" fill="#dcdfe2" stroke="#d0d3d6"/><path d="M9 7L14 10 9 13Z" fill="#f4f4f4"/><g transform="translate(14.500,11.500) rotate(-14) scale(.85)" opacity=".35"><path d="M0 0V13.500L3.200 10.600 5.600 16 8 15 5.600 9.800H10Z" fill="#fff" stroke="#333" stroke-width="1" stroke-linejoin="round"/></g></svg>
<svg class="a" style="left:1049px;top:62px" width="8" height="4"><path d="M0 0H8L4 4Z" fill="#aaa"/></svg>
<svg class="a" style="left:1065.5px;top:61.400000000000006px" width="9" height="6"><path d="M.7 .5L3.200 3 .7 5.500M5 .5L7.500 3 5 5.500" fill="none" stroke="#000" stroke-width="1.500"/></svg>
<svg class="a" style="left:6px;top:95px" width="5" height="19"><path d="M1 1h1v1h-1zM1 4h1v1h-1zM1 7h1v1h-1zM1 10h1v1h-1zM1 13h1v1h-1zM1 16h1v1h-1zM4 1h1v1h-1zM4 4h1v1h-1zM4 7h1v1h-1zM4 10h1v1h-1zM4 13h1v1h-1zM4 16h1v1h-1z" fill="#fff"/><path d="M0 0h1v1h-1zM0 3h1v1h-1zM0 6h1v1h-1zM0 9h1v1h-1zM0 12h1v1h-1zM0 15h1v1h-1zM3 0h1v1h-1zM3 3h1v1h-1zM3 6h1v1h-1zM3 9h1v1h-1zM3 12h1v1h-1zM3 15h1v1h-1z" fill="#b6b6b6"/></svg>
<svg class="a" style="left:18px;top:91px" width="24" height="24" viewBox="0 0 24 24"><path d="M.5 9.500L11 5.500 16 17 5.300 21.800Z" fill="#e0703a" stroke="#b85a2a" stroke-width=".7"/><path d="M3.800 3.300L15.500 2.500 16.500 14.500 5.500 16Z" fill="#f4c21b" stroke="#c99c10" stroke-width=".7"/><path d="M10.400 0L23.700 3.300 21 15.800 7.300 12.500Z" fill="#6d9bd1" stroke="#3f6ea8" stroke-width=".8"/><rect x="15" y="15" width="9" height="8.800" rx="1.800" fill="#5a9a5a" stroke="#4a8a4a" stroke-width=".6"/><path d="M19.500 16.500V22.300M16.600 19.400H22.400" stroke="#fff" stroke-width="2"/></svg>
<svg class="a" style="left:51px;top:91px" width="24" height="24" viewBox="0 0 24 24"><path d="M.3 7.400L12 3.200 23.900 7.400 12.400 13.800Z" fill="#c9a000" stroke="#222" stroke-width=".9" stroke-linejoin="round"/><circle cx="12.700" cy="7.900" r="7.900" fill="#8fb4e0" stroke="#4f7db8" stroke-width=".7"/><circle cx="10.500" cy="5.500" r="4.500" fill="#b8d2f0" opacity=".6"/><path d="M6 7C6.500 4 9 1.800 12.500 1.500L14 3 11.500 4.500 12.500 6.500 10 8 9.500 11 7.500 11.500ZM15.500 5L18.500 4.500 20 8 18.500 11.500 16 10.500 15 7.500ZM11.500 11.500L13.500 12 13 14.500Z" fill="#3f6ea8" opacity=".8"/><path d="M.3 7.400L12.400 13.800V23.300L.3 16.100Z" fill="#e0b400" stroke="#222" stroke-width=".9" stroke-linejoin="round"/><path d="M12.400 13.800L23.900 7.400V17L12.400 23.300Z" fill="#fff566" stroke="#222" stroke-width=".9" stroke-linejoin="round"/><rect x="14.8" y="14.4" width="9.400" height="9.400" rx="1.800" fill="#c4a000"/><path d="M19.50 19.10L19.50 15.80M19.50 19.10L22.36 17.45M19.50 19.10L22.36 20.75M19.50 19.10L19.50 22.40M19.50 19.10L16.64 20.75M19.50 19.10L16.64 17.45" stroke="#fff" stroke-width="1.300" stroke-linecap="round"/><circle cx="19.5" cy="19.1" r="1.300" fill="#fff"/></svg>
<svg class="a" style="left:84px;top:91px" width="24" height="24" viewBox="0 0 24 24"><path d="M2.500 2.500L9 17 16 2.500H21.800" fill="none" stroke="#2d4a63" stroke-width="1.300"/><g fill="#fff" stroke="#2d4a63" stroke-width=".9"><path d="M2.500 .5L4.500 2.500 2.500 4.500 .5 2.500ZM16 .5L18 2.500 16 4.500 14 2.500ZM21.800 .5L23.800 2.500 21.800 4.500 19.800 2.500Z"/><circle cx="9" cy="17.600" r="1.900"/></g><rect x="14.8" y="15" width="9.600" height="9.600" rx="1.800" fill="#c4a000"/><path d="M19.60 19.80L19.60 16.40M19.60 19.80L22.54 18.10M19.60 19.80L22.54 21.50M19.60 19.80L19.60 23.20M19.60 19.80L16.66 21.50M19.60 19.80L16.66 18.10" stroke="#fff" stroke-width="1.300" stroke-linecap="round"/><circle cx="19.6" cy="19.8" r="1.300" fill="#fff"/></svg>
<svg class="a" style="left:117px;top:91px" width="24" height="24" viewBox="0 0 24 24"><path d="M.8 23.500C1.500 17 6 6.500 22.800 0C23.500 4 20.500 8.500 17 10.500 14 15 9 17.500 4 17.500Z" fill="#7fa6d6" stroke="#3f6ea8" stroke-width=".8"/><path d="M1.200 23C4 15 11 6 22 .8" fill="none" stroke="#dce8f6" stroke-width=".9"/><path d="M6 15C10 11 15 7 20 4.500M8 16.500C12 13 15 10.500 18 9" fill="none" stroke="#4f7db5" stroke-width=".6"/><rect x="15" y="14.8" width="9.400" height="9.400" rx="1.800" fill="#c4a000"/><path d="M19.70 19.50L19.70 16.20M19.70 19.50L22.56 17.85M19.70 19.50L22.56 21.15M19.70 19.50L19.70 22.80M19.70 19.50L16.84 21.15M19.70 19.50L16.84 17.85" stroke="#fff" stroke-width="1.300" stroke-linecap="round"/><circle cx="19.7" cy="19.5" r="1.300" fill="#fff"/></svg>
<svg class="a" style="left:150px;top:91px" width="24" height="24" viewBox="0 0 24 24"><path d="M6 2V6M6 17V20.500" stroke="#2d5a8e" stroke-width="1.100"/><path d="M8.800 2V6M8.800 17V20.500" stroke="#2d5a8e" stroke-width="1.100"/><path d="M11.600 2V6M11.600 17V20.500" stroke="#2d5a8e" stroke-width="1.100"/><path d="M14.400 2V6M14.400 17V20.500" stroke="#2d5a8e" stroke-width="1.100"/><path d="M17.200 2V6M17.200 17V20.500" stroke="#2d5a8e" stroke-width="1.100"/><rect x="3.200" y="6" width="19" height="10.800" rx="1.500" fill="#6b97cc" stroke="#2d5a8e" stroke-width="1.100"/><rect x="15" y="15" width="9.400" height="9.400" rx="1.800" fill="#c4a000"/><path d="M19.70 19.70L19.70 16.40M19.70 19.70L22.56 18.05M19.70 19.70L22.56 21.35M19.70 19.70L19.70 23.00M19.70 19.70L16.84 21.35M19.70 19.70L16.84 18.05" stroke="#fff" stroke-width="1.300" stroke-linecap="round"/><circle cx="19.7" cy="19.7" r="1.300" fill="#fff"/></svg>
<div class="a" style="left:182px;top:94px;width:1px;height:19px;background:#c8c8c8"></div>
<svg class="a" style="left:190px;top:91px" width="24" height="24" viewBox="0 0 24 24"><rect x=".8" y=".8" width="22.200" height="22" rx="2.500" fill="url(#gv)" stroke="#4a6f9e" stroke-width="1.100"/><path d="M2.500 2.800L8 17 15 2.800H22" fill="none" stroke="#3a5f8e" stroke-width="1.200"/><g fill="#fff" stroke="#3a5f8e" stroke-width=".8"><path d="M2.600 1L4.400 2.800 2.600 4.600 .8 2.800ZM15 1L16.800 2.800 15 4.600 13.200 2.800ZM21.600 1L23.200 2.800 21.600 4.600 20 2.800Z"/><circle cx="8" cy="17.600" r="1.900"/></g><rect x="15" y="14.8" width="9.400" height="9.400" rx="1.800" fill="#c4a000"/><path d="M19.70 19.50L19.70 16.20M19.70 19.50L22.56 17.85M19.70 19.50L22.56 21.15M19.70 19.50L19.70 22.80M19.70 19.50L16.84 21.15M19.70 19.50L16.84 17.85" stroke="#fff" stroke-width="1.300" stroke-linecap="round"/><circle cx="19.7" cy="19.5" r="1.300" fill="#fff"/></svg>
<div class="a" style="left:222px;top:94px;width:1px;height:19px;background:#c8c8c8"></div>
<svg class="a" style="left:234px;top:95px" width="5" height="19"><path d="M1 1h1v1h-1zM1 4h1v1h-1zM1 7h1v1h-1zM1 10h1v1h-1zM1 13h1v1h-1zM1 16h1v1h-1zM4 1h1v1h-1zM4 4h1v1h-1zM4 7h1v1h-1zM4 10h1v1h-1zM4 13h1v1h-1zM4 16h1v1h-1z" fill="#fff"/><path d="M0 0h1v1h-1zM0 3h1v1h-1zM0 6h1v1h-1zM0 9h1v1h-1zM0 12h1v1h-1zM0 15h1v1h-1zM3 0h1v1h-1zM3 3h1v1h-1zM3 6h1v1h-1zM3 9h1v1h-1zM3 12h1v1h-1zM3 15h1v1h-1z" fill="#b6b6b6"/></svg>
<svg class="a" style="left:246px;top:91px" width="24" height="24" viewBox="0 0 24 24"><path d="M10.500 .5L15.300 2.500 8 17.400 3.100 14.500Z" fill="#d9d5d2"/><path d="M10.500 .5L15.300 2.500 14.300 4.500 9.500 2.400Z" fill="#efedec"/><path d="M3.100 14.500L8 17.400 2.400 22.300Z" fill="#e3e3e3"/><path d="M12.300 2.600L5.500 15.800" stroke="#e4e1de" stroke-width="1.200"/><path d="M16.400 .6L22.900 3.900 13.800 19.200 8.700 16.600Z" fill="#d7d2ce"/><path d="M16.400 .6L22.900 3.900 21.700 5.900 15.300 2.700Z" fill="#f1efee"/><path d="M8.700 16.600L13.800 19.200 7.300 23.600Z" fill="#e3e3e3"/><path d="M18.600 3.500L11.200 17.800" stroke="#e2deda" stroke-width="1.300"/></svg>
<svg class="a" style="left:266.200px;top:112.3px" width="6" height="3"><path d="M0 0H5.600L2.800 2.900Z" fill="#8c8c8c"/></svg>
<svg class="a" style="left:279px;top:91px" width="24" height="24" viewBox="0 0 24 24"><path d="M13.500 1L18.700 3.800 8.800 20.500 3.600 17.700Z" fill="#d6c41e" stroke="#8a7a00" stroke-width=".7"/><path d="M15.300 2.500L16.600 3.200 6.900 19.600 5.600 18.900Z" fill="#fff6a0"/><path d="M13.500 1L18.700 3.800 17.800 5.300 12.600 2.500Z" fill="#f4f4f4" stroke="#999" stroke-width=".6"/><path d="M3.600 17.700L8.800 20.500 3 23.600Z" fill="#b8b8b8" stroke="#555" stroke-width=".6"/><path d="M3.300 20.800L5 21.800 3 23.600Z" fill="#222"/></svg>
<svg class="a" style="left:312px;top:91px" width="24" height="24" viewBox="0 0 24 24"><rect x="1.200" y="1" width="19.400" height="20" rx="2" fill="#dcdddf" stroke="#d0d2d4"/><rect x="5" y="2.500" width="11.500" height="7.500" fill="#f4f4f4"/><path d="M6.500 4.500H15M6.500 6.300H15M6.500 8.100H15" stroke="#dcdcdc" stroke-width=".8"/><rect x="6" y="14" width="10" height="6" fill="#eeeeee"/><rect x="7.500" y="15" width="2.200" height="4" fill="#d4d6d8"/><path d="M20 9L23 10.700 16 21.500 13 19.800Z" fill="#dcd6d2"/><path d="M13 19.800L16 21.500 12.600 24Z" fill="#e8e6e4"/></svg>
<svg class="a" style="left:345px;top:91px" width="24" height="24" viewBox="0 0 24 24"><path d="M1 6C1 1.500 6 .5 10 1.500 13 2.300 16 3.500 18.500 2.500 22.500 1.500 23.800 5.500 21 9 19 11.500 14 9.500 11 10.200 7.500 11.300 3.500 14 2 11 1.200 9 1 8 1 6Z" fill="#dfe1df" stroke="#c8c8c8"/><rect x="13.3" y="13.7" width="10.800" height="10.800" rx="1.800" fill="#bcb9a9"/><path d="M18.70 19.10L23.00 19.10M18.70 19.10L18.70 23.40M18.70 19.10L14.40 19.10M18.70 19.10L18.70 14.80" stroke="#fff" stroke-width="1" stroke-linecap="round"/><path d="M18.70 19.10L21.32 21.72M18.70 19.10L16.08 21.72M18.70 19.10L16.08 16.48M18.70 19.10L21.32 16.48" stroke="#fff" stroke-width="1.100" stroke-linecap="round"/><circle cx="18.700000000000003" cy="19.1" r="2" fill="#fff"/><circle cx="18.700000000000003" cy="19.1" r=".7" fill="#bcb9a9"/></svg>
<svg class="a" style="left:378px;top:91px" width="24" height="24" viewBox="0 0 24 24"><path d="M8 4.500H21M7 6.500L2.500 21" stroke="#c4c4c4" stroke-width=".9"/><rect x="5.500" y="2.200" width="5.200" height="5.200" fill="#f4f4f4" stroke="#b0b0b0"/><circle cx="8.100" cy="4.800" r="1" fill="#b0b0b0"/><path d="M10.500 20.500L22.500 8.500" stroke="#d4d2c4" stroke-width="3"/><path d="M12 10.500L22.500 21" stroke="#c8c4b8" stroke-width="3.200"/><path d="M9.800 13C10.500 9.500 14 8 17 8.500L12.500 14.500Z" fill="#dcdcdc" stroke="#c8c8c8" stroke-width=".6"/></svg>
<svg class="a" style="left:408px;top:101px" width="8" height="4"><path d="M0 0H8L4 4Z" fill="#7a7a7a"/></svg>
<svg class="a" style="left:423px;top:91px" width="24" height="24" viewBox="0 0 24 24"><g fill="#dedbcc" stroke="#cbc8b9" stroke-width=".8"><rect x="2" y="2.200" width="19.800" height="5"/><rect x="2" y="9.500" width="19.800" height="5"/><rect x="2" y="16.700" width="19.800" height="5"/></g><path d="M17.500 1L22 3.300 13.300 19.300 8.800 17Z" fill="#dcd6d2"/><path d="M19 1.800L20.500 2.600 11.800 18.600 10.300 17.800Z" fill="#efebe8"/><path d="M8.800 17L13.300 19.300 8.300 23Z" fill="#ececec" stroke="#d0d0d0" stroke-width=".5"/><path d="M17.500 1L22 3.300" stroke="#f8f8f8" stroke-width="1.500"/></svg>
<svg class="a" style="left:456px;top:91px" width="24" height="24" viewBox="0 0 24 24"><rect x="2.200" y="2.200" width="13.600" height="13.600" fill="#e2e1d2" stroke="#c6c5b6"/><path d="M4.500 5.200H20.500" stroke="#cdbebe" stroke-width="2.200"/><path d="M5 9H19.800L18.800 22.800H6Z" fill="#d4c6c6"/><path d="M8.500 10.500V21.500M12.400 10.500V21.500M16.300 10.500V21.500" stroke="#e2d8d8" stroke-width="1.300"/><path d="M5.500 15.300H19.300" stroke="#cdbebe" stroke-width=".8"/></svg>
<svg class="a" style="left:489px;top:91px" width="24" height="24" viewBox="0 0 24 24"><path d="M1.500 4L15.500 13.500 13 14.800Z" fill="#e6e6e6" stroke="#cfcfcf" stroke-width=".6"/><path d="M1 11L16 8.500 14 11.800 3 12.500Z" fill="#e2e2e2" stroke="#d0d0d0" stroke-width=".6"/><ellipse cx="19.800" cy="8" rx="3.700" ry="2.500" transform="rotate(-35 19.800 8)" fill="none" stroke="#d2c4c4" stroke-width="1.400"/><ellipse cx="19.500" cy="16.500" rx="3.700" ry="2.500" transform="rotate(50 19.500 16.500)" fill="none" stroke="#d2c4c4" stroke-width="1.400"/><path d="M14 11.500L17 9.500M14.500 12L17 14" stroke="#d2c4c4" stroke-width="1.400"/></svg>
<svg class="a" style="left:522px;top:91px" width="24" height="24" viewBox="0 0 24 24"><path d="M8.700 2.200H16.200L19.700 5.700V17.700H8.700Z" fill="#f9f9f9" stroke="#c6c6c6" stroke-width=".9"/><path d="M16.200 2.200V5.700H19.700" fill="#f0f0f0" stroke="#c6c6c6" stroke-width=".8"/><path d="M4.200 6.200H12.200L15.700 9.700V21.700H4.200Z" fill="#f9f9f9" stroke="#c6c6c6" stroke-width=".9"/><path d="M12.200 6.200V9.700H15.700" fill="#f0f0f0" stroke="#c6c6c6" stroke-width=".8"/><path d="M6 11.500H13.500" stroke="#d6d6d6" stroke-width=".8"/><path d="M6 13.500H11.500" stroke="#d6d6d6" stroke-width=".8"/><path d="M6 15.500H13.500" stroke="#d6d6d6" stroke-width=".8"/><path d="M6 17.500H11.500" stroke="#d6d6d6" stroke-width=".8"/><path d="M6 19.500H13.500" stroke="#d6d6d6" stroke-width=".8"/></svg>
<svg class="a" style="left:555px;top:91px" width="24" height="24" viewBox="0 0 24 24"><rect x="4" y="2.500" width="15.800" height="19.800" rx="1" fill="#ece8e4" stroke="#ccc4bc"/><rect x="8" y="1" width="7.800" height="4" rx="1" fill="#dcdcdc" stroke="#d0d0d0" stroke-width=".6"/><path d="M6.500 5H13.800L17.300 8.500V20H6.500Z" fill="#f9f9f9" stroke="#c6c6c6" stroke-width=".9"/><path d="M13.800 5V8.500H17.300" fill="#f0f0f0" stroke="#c6c6c6" stroke-width=".8"/><path d="M8.500 10.500H15" stroke="#dcdcdc" stroke-width=".7"/><path d="M8.500 13H13.500" stroke="#dcdcdc" stroke-width=".7"/><path d="M8.500 15.500H15" stroke="#dcdcdc" stroke-width=".7"/><path d="M8.500 18H13.500" stroke="#dcdcdc" stroke-width=".7"/></svg>
<svg class="a" style="left:588px;top:91px" width="24" height="24" viewBox="0 0 24 24"><path d="M3 10.700L10.500 2.800V7.500C17 6.500 21 10 20.800 14.500 20.600 18.500 16.500 20.500 12.500 20.200V16.500C14.500 16.800 16.300 15.800 16.300 14 16.300 12.300 14 11.800 10.500 12.300V18.500Z" fill="#ddd7d3" stroke="#d6d0cc" stroke-width=".6" stroke-linejoin="round"/></svg>
<svg class="a" style="left:621px;top:91px" width="24" height="24" viewBox="0 0 24 24"><path transform="translate(24,0) scale(-1,1)" d="M3 10.700L10.500 2.800V7.500C17 6.500 21 10 20.800 14.500 20.600 18.500 16.500 20.500 12.500 20.200V16.500C14.500 16.800 16.300 15.800 16.300 14 16.300 12.300 14 11.800 10.500 12.300V18.500Z" fill="#d8dad8" stroke="#d0d2d0" stroke-width=".6" stroke-linejoin="round"/></svg>
<svg class="a" style="left:658px;top:95px" width="5" height="19"><path d="M1 1h1v1h-1zM1 4h1v1h-1zM1 7h1v1h-1zM1 10h1v1h-1zM1 13h1v1h-1zM1 16h1v1h-1zM4 1h1v1h-1zM4 4h1v1h-1zM4 7h1v1h-1zM4 10h1v1h-1zM4 13h1v1h-1zM4 16h1v1h-1z" fill="#fff"/><path d="M0 0h1v1h-1zM0 3h1v1h-1zM0 6h1v1h-1zM0 9h1v1h-1zM0 12h1v1h-1zM0 15h1v1h-1zM3 0h1v1h-1zM3 3h1v1h-1zM3 6h1v1h-1zM3 9h1v1h-1zM3 12h1v1h-1zM3 15h1v1h-1z" fill="#b6b6b6"/></svg>
<svg class="a" style="left:669px;top:94px" width="24" height="14" viewBox="-1 -1 24 14"><path d="M.3 6.300L4.300 1H20.600V11.600H4.300Z" fill="url(#gy)" stroke="#c8a200" stroke-width="1" stroke-linejoin="round"/><text x="5.200" y="9.200" font-family="'Liberation Serif',serif" font-weight="bold" font-size="8.700" fill="#5a5a4a" fill-opacity=".82" letter-spacing=".25" text-rendering="geometricPrecision">abc</text></svg>
<svg class="a" style="left:703px;top:91px" width="24" height="24" viewBox="0 0 24 24"><circle cx="9" cy="9" r="6.900" fill="#1a9e4a" stroke="#0a7a2a" stroke-width=".7"/><path d="M9 9L3.100 5.500A6.900 6.900 0 0 1 14.900 5.500Z" fill="#fcc81a" stroke="#d4a000" stroke-width=".5"/><path d="M9 9L14.900 5.500A6.900 6.900 0 0 1 9 15.900Z" fill="#c81a14" stroke="#8a0a0a" stroke-width=".5"/><rect x="10.300" y="16.300" width="3.200" height="6.500" fill="#fcc81a" stroke="#e08a00" stroke-width=".7"/><rect x="14.200" y="10.200" width="3.600" height="12.600" fill="#1a9e4a" stroke="#0a6a2a" stroke-width=".7"/><rect x="18.500" y="17.300" width="3.400" height="5.500" fill="#c81a14" stroke="#8a0a0a" stroke-width=".7"/></svg>
<div class="a" style="left:735px;top:94px;width:1px;height:19px;background:#c8c8c8"></div>
<svg class="a" style="left:742px;top:94px" width="24" height="14" viewBox="-1 -1 24 14"><path d="M.3 6.300L4.300 1H20.600V11.600H4.300Z" fill="url(#gb)" stroke="#4a8af0" stroke-width="1.200" stroke-linejoin="round"/><text x="5.200" y="9.200" font-family="'Liberation Serif',serif" font-weight="bold" font-size="8.700" fill="#6a6a6a" fill-opacity=".82" letter-spacing=".25" text-rendering="geometricPrecision">ab</text></svg>
<svg class="a" style="left:756px;top:98px" width="12" height="16"><path d="M3 1.500Q3.800 -.3 5 1.500L6.500 8 4.800 8.500Z" fill="#f4f4f4" stroke="#666" stroke-width=".7"/><circle cx="6" cy="11" r="4.700" fill="url(#gball)"/></svg>
<svg class="a" style="left:775px;top:94px" width="24" height="14" viewBox="-1 -1 24 14"><path d="M.3 6.300L4.300 1H20.600V11.600H4.300Z" fill="url(#gr)" stroke="#ff0000" stroke-width="1.400" stroke-linejoin="round"/><text x="5.200" y="9.200" font-family="'Liberation Serif',serif" font-weight="bold" font-size="8.700" fill="#e81010" fill-opacity=".82" letter-spacing=".25" text-rendering="geometricPrecision">abc</text></svg>
<div class="a" style="left:808px;top:94px;width:1px;height:19px;background:#c8c8c8"></div>
<svg class="a" style="left:815px;top:94px" width="24" height="14" viewBox="-1 -1 24 14"><path d="M.3 6.300L4.300 1H20.600V11.600H4.300Z" fill="url(#gy)" stroke="#c8a200" stroke-width="1" stroke-linejoin="round"/><text x="5.200" y="9.200" font-family="'Liberation Serif',serif" font-weight="bold" font-size="8.700" fill="#5a5a4a" fill-opacity=".82" letter-spacing=".25" text-rendering="geometricPrecision">ab</text></svg>
<svg class="a" style="left:829px;top:98px" width="12" height="16"><path d="M3 1.500Q3.800 -.3 5 1.500L6.500 8 4.800 8.500Z" fill="#f4f4f4" stroke="#666" stroke-width=".7"/><circle cx="6" cy="11" r="4.700" fill="url(#gball)"/></svg>
<svg class="a" style="left:848px;top:94px" width="24" height="14" viewBox="-1 -1 24 14"><path d="M.3 6.300L4.300 1H20.600V11.600H4.300Z" fill="url(#gy)" stroke="#c8a200" stroke-width="1" stroke-linejoin="round"/><text x="5.200" y="9.200" font-family="'Liberation Serif',serif" font-weight="bold" font-size="8.700" fill="#5a5a4a" fill-opacity=".82" letter-spacing=".25" text-rendering="geometricPrecision">abc</text></svg>
<svg class="a" style="left:856px;top:105px" width="18" height="11"><path d="M.8 5.800C4 1 12 .3 16.800 5.300 12.500 10 5 10.500 .8 5.800Z" fill="#fff" stroke="#6a6a6a" stroke-width=".8"/><circle cx="8.800" cy="5.500" r="3.200" fill="#6a9ee4"/><circle cx="8.800" cy="5.500" r="1.400" fill="#1a2438"/><path d="M1 4C5 -.3 12 -.5 17 3.500" fill="none" stroke="#555" stroke-width=".8"/></svg>
<svg class="a" style="left:901.5px;top:100.5px" width="9" height="6"><path d="M.7 .5L3.200 3 .7 5.500M5 .5L7.500 3 5 5.500" fill="none" stroke="#000" stroke-width="1.500"/></svg>
<svg class="a" style="left:920px;top:95px" width="5" height="19"><path d="M1 1h1v1h-1zM1 4h1v1h-1zM1 7h1v1h-1zM1 10h1v1h-1zM1 13h1v1h-1zM1 16h1v1h-1zM4 1h1v1h-1zM4 4h1v1h-1zM4 7h1v1h-1zM4 10h1v1h-1zM4 13h1v1h-1zM4 16h1v1h-1z" fill="#fff"/><path d="M0 0h1v1h-1zM0 3h1v1h-1zM0 6h1v1h-1zM0 9h1v1h-1zM0 12h1v1h-1zM0 15h1v1h-1zM3 0h1v1h-1zM3 3h1v1h-1zM3 6h1v1h-1zM3 9h1v1h-1zM3 12h1v1h-1zM3 15h1v1h-1z" fill="#b6b6b6"/></svg>
<svg class="a" style="left:932px;top:91px" width="24" height="24" viewBox="0 0 24 24"><circle cx="12.100" cy="10.700" r="11.200" fill="#4f7fba" stroke="#2d5a94" stroke-width=".8"/><circle cx="9.500" cy="7.500" r="6.500" fill="#7aa4d8" opacity=".55"/><path d="M12.100 -.3V21.500M1 10.700H23.200M3 4.500C9 7.500 15.500 7.500 21.200 4.500M3 17C9 14 15.500 14 21.200 17" fill="none" stroke="#a8c4e6" stroke-width=".9"/><ellipse cx="12.100" cy="10.700" rx="5.600" ry="11" fill="none" stroke="#a8c4e6" stroke-width=".9"/><path d="M5 5.500L10 4 11.500 8.500 6.500 10ZM14 5.500L19.500 6.500 19 11 14 10ZM7.500 12.500L11 12 10.500 15.500Z" fill="#dbe8f8" opacity=".8"/><path d="M9 12.500L12 12.500 12.600 16H15.400L16 12.500 19 12.500 22.500 20H5.500Z" fill="#000"/><ellipse cx="8.600" cy="20.300" rx="4.300" ry="3" fill="#000"/><ellipse cx="19.400" cy="20.300" rx="4.300" ry="3" fill="#000"/><ellipse cx="8.600" cy="20.800" rx="2.800" ry="1.500" fill="#fff"/><ellipse cx="19.400" cy="20.800" rx="2.800" ry="1.500" fill="#fff"/></svg>
<svg class="a" style="left:969px;top:95px" width="5" height="19"><path d="M1 1h1v1h-1zM1 4h1v1h-1zM1 7h1v1h-1zM1 10h1v1h-1zM1 13h1v1h-1zM1 16h1v1h-1zM4 1h1v1h-1zM4 4h1v1h-1zM4 7h1v1h-1zM4 10h1v1h-1zM4 13h1v1h-1zM4 16h1v1h-1z" fill="#fff"/><path d="M0 0h1v1h-1zM0 3h1v1h-1zM0 6h1v1h-1zM0 9h1v1h-1zM0 12h1v1h-1zM0 15h1v1h-1zM3 0h1v1h-1zM3 3h1v1h-1zM3 6h1v1h-1zM3 9h1v1h-1zM3 12h1v1h-1zM3 15h1v1h-1z" fill="#b6b6b6"/></svg>
<svg class="a" style="left:981px;top:91px" width="24" height="24" viewBox="0 0 24 24"><path d="M11.500 1.500C7.500 1.500 7.300 3 7.300 4.500V7H12V8H4.800C2.800 8 1.700 9.500 1.700 12S2.800 16 4.800 16H6.500V13.500C6.500 11.500 8 10.500 9.500 10.500H14C15.500 10.500 16.500 9.500 16.500 8V4.500C16.500 2.500 14.500 1.500 11.500 1.500Z" fill="#3776ab"/><circle cx="9.300" cy="4.200" r="1" fill="#fff"/><path d="M12.500 22.500C16.500 22.500 16.700 21 16.700 19.500V17H12V16H19.200C21.200 16 22.300 14.500 22.300 12S21.200 8 19.200 8H17.500V10.500C17.500 12.500 16 13.500 14.500 13.500H10C8.500 13.500 7.500 14.500 7.500 16V19.500C7.500 21.500 9.500 22.500 12.500 22.500Z" fill="#ffd43b"/><circle cx="14.700" cy="19.800" r="1" fill="#fff"/><path d="M17 18.300L22.500 20.600 17 22.900" fill="none" stroke="#444" stroke-width="1.100"/></svg>
<svg class="a" style="left:1018px;top:95px" width="5" height="19"><path d="M1 1h1v1h-1zM1 4h1v1h-1zM1 7h1v1h-1zM1 10h1v1h-1zM1 13h1v1h-1zM1 16h1v1h-1zM4 1h1v1h-1zM4 4h1v1h-1zM4 7h1v1h-1zM4 10h1v1h-1zM4 13h1v1h-1zM4 16h1v1h-1z" fill="#fff"/><path d="M0 0h1v1h-1zM0 3h1v1h-1zM0 6h1v1h-1zM0 9h1v1h-1zM0 12h1v1h-1zM0 15h1v1h-1zM3 0h1v1h-1zM3 3h1v1h-1zM3 6h1v1h-1zM3 9h1v1h-1zM3 12h1v1h-1zM3 15h1v1h-1z" fill="#b6b6b6"/></svg>
<svg class="a" style="left:1030px;top:91px" width="24" height="24" viewBox="0 0 24 24"><rect x="2" y="1.300" width="20" height="20.500" fill="#6d99cc" stroke="#1f2f40" stroke-width="1.100"/><rect x="2.500" y="1.800" width="4.500" height="19.500" fill="#2d4156"/><text x="14.500" y="17" text-anchor="middle" font-family="'Liberation Sans',sans-serif" font-size="15" fill="#fff">?</text></svg>
<svg class="a" style="left:1067px;top:95px" width="5" height="19"><path d="M1 1h1v1h-1zM1 4h1v1h-1zM1 7h1v1h-1zM1 10h1v1h-1zM1 13h1v1h-1zM1 16h1v1h-1zM4 1h1v1h-1zM4 4h1v1h-1zM4 7h1v1h-1zM4 10h1v1h-1zM4 13h1v1h-1zM4 16h1v1h-1z" fill="#fff"/><path d="M0 0h1v1h-1zM0 3h1v1h-1zM0 6h1v1h-1zM0 9h1v1h-1zM0 12h1v1h-1zM0 15h1v1h-1zM3 0h1v1h-1zM3 3h1v1h-1zM3 6h1v1h-1zM3 9h1v1h-1zM3 12h1v1h-1zM3 15h1v1h-1z" fill="#b6b6b6"/></svg>
<svg class="a" style="left:6px;top:134px" width="5" height="19"><path d="M1 1h1v1h-1zM1 4h1v1h-1zM1 7h1v1h-1zM1 10h1v1h-1zM1 13h1v1h-1zM1 16h1v1h-1zM4 1h1v1h-1zM4 4h1v1h-1zM4 7h1v1h-1zM4 10h1v1h-1zM4 13h1v1h-1zM4 16h1v1h-1z" fill="#fff"/><path d="M0 0h1v1h-1zM0 3h1v1h-1zM0 6h1v1h-1zM0 9h1v1h-1zM0 12h1v1h-1zM0 15h1v1h-1zM3 0h1v1h-1zM3 3h1v1h-1zM3 6h1v1h-1zM3 9h1v1h-1zM3 12h1v1h-1zM3 15h1v1h-1z" fill="#b6b6b6"/></svg>
<svg class="a" style="left:18px;top:130px" width="24" height="24" viewBox="0 0 24 24"><rect x="1.500" y="1.500" width="21" height="19" fill="#e0e0e0" stroke="#222" stroke-width="1" stroke-dasharray="2 1.300"/><rect x="2.700" y="2.700" width="13" height="13" fill="#fce94f" stroke="#c4a000" stroke-width=".9"/><g transform="translate(11,8.800) rotate(-14) scale(.95)"><path d="M0 0V13.500L3.200 10.600 5.600 16 8 15 5.600 9.800H10Z" fill="#fff" stroke="#333" stroke-width="1" stroke-linejoin="round"/></g></svg>
<svg class="a" style="left:48px;top:140px" width="8" height="4"><path d="M0 0H8L4 4Z" fill="#555"/></svg>
<svg class="a" style="left:64px;top:130px" width="24" height="24" viewBox="0 0 24 24"><rect x="4.500" y="8.500" width="16" height="13.500" fill="#fce94f" stroke="#c4a000"/><rect x="1.500" y="3.500" width="15" height="13.300" rx="1" fill="#c9cdd2" stroke="#8a8a8a"/><rect x="3.500" y="5.800" width="11" height="3.200" fill="#fff" stroke="#999" stroke-width=".5"/><rect x="3.500" y="11" width="11" height="3.200" fill="#fff" stroke="#999" stroke-width=".5"/></svg>
<svg class="a" style="left:93px;top:140px" width="8" height="4"><path d="M0 0H8L4 4Z" fill="#555"/></svg>
<svg class="a" style="left:109px;top:130px" width="24" height="24" viewBox="0 0 24 24"><rect x="1.500" y="2.300" width="12.500" height="13.300" fill="#fce94f" stroke="#c4a000"/><rect x="5.800" y="6.300" width="13.500" height="13.300" fill="#fce94f" stroke="#c4a000"/><rect x="12.500" y="13.500" width="11" height="10.500" rx="2" fill="#d42020" stroke="#b01010" stroke-width=".6"/><circle cx="18" cy="18.800" r="3.300" fill="#d42020" stroke="#fff" stroke-width="1.400"/><path d="M15.800 21L20.200 16.600" stroke="#fff" stroke-width="1.400"/></svg>
<svg class="a" style="left:138px;top:140px" width="8" height="4"><path d="M0 0H8L4 4Z" fill="#555"/></svg>
<svg class="a" style="left:154px;top:130px" width="24" height="24" viewBox="0 0 24 24"><rect x="1.500" y="2.300" width="14" height="14" fill="#fce94f" stroke="#c4a000"/><path d="M18.800 23C17 19.500 15.600 18 15.600 16.200A3.200 3.200 0 0 1 22 16.200C22 18 20.600 19.500 18.800 23Z" fill="#5c8aab"/><circle cx="18.800" cy="16.200" r="1.200" fill="#fff"/></svg>
<svg class="a" style="left:9px;top:188px" width="16" height="16" viewBox="0 0 16 16"><rect x="1.500" y="1.500" width="11.500" height="11.500" fill="#f2f2f2" stroke="#6e6e6e"/><rect x="9.200" y="10.200" width="6" height="6" rx="1.500" fill="#5a9a5a"/><circle cx="12.200" cy="13.200" r="1.600" fill="#a8cca8"/></svg>
<svg class="a" style="left:34.500px;top:188px" width="15.500" height="15.500" viewBox="0 0 24 24"><path d="M1.800 10.500C2.500 3.500 11.500 .5 16.500 5.200L19.800 1.500 21.300 11.500 11.300 10.800 14.300 7.800C11 4.800 6 7 5.800 10.500Z" fill="url(#grf)" stroke="#3a78c0" stroke-width=".5"/><path d="M22.200 13.500C21.500 20.500 12.500 23.500 7.500 18.800L4.200 22.500 2.700 12.500 12.700 13.200 9.700 16.200C13 19.200 18 17 18.200 13.500Z" fill="url(#grf)" stroke="#3a78c0" stroke-width=".5"/></svg>
<svg class="a" style="left:59px;top:188.3px" width="16" height="16" viewBox="0 0 16 16"><path d="M1 1H15L9.500 8V15.300L6.500 13.500V8Z" fill="#6d99cc" stroke="#4a76ad" stroke-width=".8" stroke-linejoin="round"/><path d="M1.200 1H14.800L13.500 3H2.500Z" fill="#fce94f" stroke="#d4b000" stroke-width=".6"/></svg>
<svg class="a" style="left:84px;top:188px" width="16" height="16" viewBox="0 0 16 16"><path d="M1.500 2.500H9M3.500 2.500V13.500M3.500 7.500H6M3.500 13H6" fill="none" stroke="#8a8a8a" stroke-width=".9"/><rect x="5" y="5.800" width="2.800" height="2.800" fill="#fc9a1a"/><rect x="5" y="11.500" width="2.800" height="2.800" fill="#fc9a1a"/><path d="M11 0L16 5.500H13.200V13.500H8.800V5.500H6Z" fill="#5a8fd0" stroke="#2d4f7c" stroke-width=".9" stroke-linejoin="round"/></svg>
<svg class="a" style="left:109px;top:187.8px" width="16" height="16" viewBox="0 0 16 16"><circle cx="8" cy="8" r="6.700" fill="#6b96c8" stroke="#5a86b8" stroke-width=".6"/><text x="8.200" y="12" text-anchor="middle" font-family="'Liberation Serif',serif" font-style="italic" font-weight="bold" font-size="11.500" fill="#fff">i</text></svg>
<svg class="a" style="left:9px;top:651px" width="16" height="16" viewBox="0 0 16 16"><path d="M2.500 4L7 2.300 11.500 6 6.500 7.800Z" fill="#fce94f"/><path d="M1.800 6.800L6.500 5.800 9 9 4 10Z" fill="#7fb0e8"/><path d="M.8 9.500L5 8.500 10.500 13.800 6 13Z" fill="#ee3a3a"/><path d="M15.300 2.200L10.800 7.300" stroke="#c98a2a" stroke-width="2.200" stroke-linecap="round"/><path d="M7.300 8.200L10.800 6.200 13 9.800 8.800 14.300 5.300 11Z" fill="#e8bc72" stroke="#c9953a" stroke-width=".6"/></svg>
<svg class="a" style="left:34px;top:651px" width="16" height="16" viewBox="0 0 16 16"><rect x="1.500" y="5.500" width="8" height="8.500" fill="none" stroke="#7a7a7a"/><rect x="3.500" y="3.500" width="8" height="8.500" fill="#f0f0f0" stroke="#7a7a7a"/><path d="M7.500 9V2.500Q7.500 .6 9 .6T10.500 2.500V8" fill="none" stroke="#3f6ea8" stroke-width="1"/><rect x="9.500" y="10" width="6" height="6" rx="1.500" fill="#5a9a5a"/><circle cx="12.500" cy="13" r="1.600" fill="#b8d8b8"/></svg>
<svg class="a" style="left:60px;top:652px" width="16" height="16" viewBox="0 0 16 16"><path d="M.5 6.500C4 1.500 12 1.500 15.500 6.500 12 11 4 11 .5 6.500Z" fill="#fff" stroke="#8a8a8a" stroke-width=".9"/><circle cx="8" cy="6.300" r="3.300" fill="#5a86c8"/><circle cx="8" cy="6.300" r="1.500" fill="#1a2a4a"/><path d="M1 4.500C5 .2 11 .2 15.500 4.500" fill="none" stroke="#8a8a8a" stroke-width=".8"/><path d="M11 12H15.500L13.200 14.500Z" fill="#333"/></svg>
<svg class="a" style="left:84px;top:650.5px" width="16" height="16" viewBox="0 0 16 16"><path d="M1 1H15L9.500 8V15.300L6.500 13.500V8Z" fill="#6d99cc" stroke="#4a76ad" stroke-width=".8" stroke-linejoin="round"/><path d="M1.200 1H14.800L13.500 3H2.500Z" fill="#fce94f" stroke="#d4b000" stroke-width=".6"/></svg>
<div class="a" style="left:111px;top:647px;font:18px/20px 'Liberation Serif',serif;color:#c4c4c4">ε</div>
<div class="a" style="left:120px;top:660px;width:2px;height:6px;background:#d4d4d4"></div>
<svg class="a" style="left:131.5px;top:657.3px" width="8" height="4"><path d="M0 0H8L4 4Z" fill="#aaa"/></svg>
<svg class="a" style="left:147px;top:650.5px" width="16" height="16" viewBox="0 0 16 16"><path d="M1 1.500H8M2.500 1.500V13.500M2.500 7.500H5M2.500 13H5" fill="none" stroke="#8a8a8a" stroke-width=".9"/><rect x="4" y="5.800" width="2.800" height="2.800" fill="#fc9a1a"/><rect x="4" y="11.500" width="2.800" height="2.800" fill="#fc9a1a"/><path d="M10.500 14L15.500 8.500H12.700V.5H8.300V8.500H5.500Z" fill="#5a8fd0" stroke="#2d4f7c" stroke-width=".9" stroke-linejoin="round"/></svg>
<svg class="a" style="left:172px;top:650.5px" width="16" height="16" viewBox="0 0 16 16"><path d="M1 1.500H8M2.500 1.500V13.500M2.500 7.500H5M2.500 13H5" fill="none" stroke="#8a8a8a" stroke-width=".9"/><rect x="4" y="5.800" width="2.800" height="2.800" fill="#fc9a1a"/><rect x="4" y="11.500" width="2.800" height="2.800" fill="#fc9a1a"/><path d="M10.500 0L15.500 5.500H12.700V13.500H8.300V5.500H5.500Z" fill="#5a8fd0" stroke="#2d4f7c" stroke-width=".9" stroke-linejoin="round"/></svg>
<svg class="a" style="left:196px;top:651px" width="16" height="16" viewBox="0 0 16 16"><rect x="1.500" y="1.500" width="11" height="10.500" fill="#f4f4f4" stroke="#7a7a7a"/><rect x="9" y="9" width="6.500" height="5.500" rx="1.500" fill="#e8203a"/><path d="M10.500 11.800H14" stroke="#fff" stroke-width="1.300"/></svg>
<svg class="a" style="left:4.60px;top:163.56px" width="38" height="16.6" viewBox="0 -12.80 38 16.6"><text class="cj" x="0" y="0" font-size="12" fill="#000">浏览器</text></svg>
<svg class="a" style="left:193px;top:166px" width="26" height="11"><rect x="0.6" y="0.6" width="10" height="10.200" rx="2.400" fill="#f4f4f4" stroke="#5a5856" stroke-width="1.200"/><rect x="2.500" y="4.500" width="4" height="4" rx="1" fill="none" stroke="#444"/><path d="M4.500 4V3.200q0-.7.7-.7h2.600q.7 0 .7.7v2.600q0 .7-.7.7H7" fill="none" stroke="#444"/><rect x="14.600" y="0.6" width="10" height="10.200" rx="2.400" fill="#f4f4f4" stroke="#5a5856" stroke-width="1.200"/><path d="M17.200 3.300l4.800 4.800M22 3.300l-4.800 4.800" stroke="#4a4846" stroke-width="1.900"/></svg>
<div class="a" style="left:2px;top:212px;width:217px;height:406px;background:#fff;border:1px solid #a0a0a0;border-bottom:none;border-right:none"></div>
<div class="a" style="left:3px;top:213px;width:203px;height:391px;overflow:hidden">
<svg class="a" style="left:47px;top:5.1px" width="5" height="8"><path d="M0 0V8L4.500 4Z" fill="#404040"/></svg>
<svg class="a" style="left:64px;top:2.0999999999999996px" width="13" height="14"><path d="M1 3.200v7.600c0 1.400 2.400 2.400 5.500 2.400s5.500-1 5.500-2.400V3.200" fill="#fff" stroke="#777"/><ellipse cx="6.500" cy="3.200" rx="5.500" ry="2.300" fill="#fff" stroke="#777"/><path d="M1 7c0 1.400 2.400 2.400 5.500 2.400S12 8.400 12 7" fill="none" stroke="#777"/></svg>
<div class="a" style="left:84px;top:0.30px;font:13.4px/19px 'Liberation Sans',sans-serif;color:#000;white-space:nowrap;letter-spacing:0.1px;">jsjbq</div>
<svg class="a" style="left:47px;top:24.1px" width="5" height="8"><path d="M0 0V8L4.500 4Z" fill="#404040"/></svg>
<svg class="a" style="left:64px;top:21.1px" width="13" height="14"><path d="M1 3.200v7.600c0 1.400 2.400 2.400 5.500 2.400s5.500-1 5.500-2.400V3.200" fill="#fff" stroke="#777"/><ellipse cx="6.500" cy="3.200" rx="5.500" ry="2.300" fill="#fff" stroke="#777"/><path d="M1 7c0 1.400 2.400 2.400 5.500 2.400S12 8.400 12 7" fill="none" stroke="#777"/></svg>
<div class="a" style="left:84px;top:19.30px;font:13.4px/19px 'Liberation Sans',sans-serif;color:#000;white-space:nowrap;letter-spacing:0.1px;">public</div>
<svg class="a" style="left:47px;top:43.1px" width="5" height="8"><path d="M0 0V8L4.500 4Z" fill="#404040"/></svg>
<svg class="a" style="left:64px;top:40.1px" width="13" height="14"><path d="M1 3.200v7.600c0 1.400 2.400 2.400 5.500 2.400s5.500-1 5.500-2.400V3.200" fill="#fff" stroke="#777"/><ellipse cx="6.500" cy="3.200" rx="5.500" ry="2.300" fill="#fff" stroke="#777"/><path d="M1 7c0 1.400 2.400 2.400 5.500 2.400S12 8.400 12 7" fill="none" stroke="#777"/></svg>
<div class="a" style="left:84px;top:38.30px;font:13.4px/19px 'Liberation Sans',sans-serif;color:#000;white-space:nowrap;letter-spacing:0.1px;">wargame</div>
<svg class="a" style="left:47px;top:62.099999999999994px" width="5" height="8"><path d="M0 0V8L4.500 4Z" fill="#404040"/></svg>
<svg class="a" style="left:64px;top:59.099999999999994px" width="13" height="14"><path d="M1 3.200v7.600c0 1.400 2.400 2.400 5.500 2.400s5.500-1 5.500-2.400V3.200" fill="#fff" stroke="#777"/><ellipse cx="6.500" cy="3.200" rx="5.500" ry="2.300" fill="#fff" stroke="#777"/><path d="M1 7c0 1.400 2.400 2.400 5.500 2.400S12 8.400 12 7" fill="none" stroke="#777"/></svg>
<div class="a" style="left:84px;top:57.30px;font:13.4px/19px 'Liberation Sans',sans-serif;color:#000;white-space:nowrap;letter-spacing:0.1px;">wjbq</div>
<svg class="a" style="left:45px;top:83.1px" width="8" height="5"><path d="M0 0H8L4 4.500Z" fill="#404040"/></svg>
<svg class="a" style="left:64px;top:78.1px" width="13" height="14"><path d="M1 3.200v7.600c0 1.400 2.400 2.400 5.500 2.400s5.500-1 5.500-2.400V3.200" fill="#fff" stroke="#777"/><ellipse cx="6.500" cy="3.200" rx="5.500" ry="2.300" fill="#fff" stroke="#777"/><path d="M1 7c0 1.400 2.400 2.400 5.500 2.400S12 8.400 12 7" fill="none" stroke="#777"/></svg>
<div class="a" style="left:84px;top:76.30px;font:13.4px/19px 'Liberation Sans',sans-serif;color:#000;white-space:nowrap;letter-spacing:0.1px;">wjlk</div>
<svg class="a" style="left:67px;top:100.1px" width="5" height="8"><path d="M0 0V8L4.500 4Z" fill="#404040"/></svg>
<svg class="a" style="left:84px;top:96.1px" width="14" height="14"><g fill="#fff" stroke="#8a8a8a" stroke-width=".9"><circle cx="2" cy="11.500" r="1.300"/><circle cx="4.500" cy="5" r="1.300"/><circle cx="11" cy="2" r="1.300"/></g></svg>
<div class="a" style="left:104px;top:95.30px;font:13.4px/19px 'Liberation Sans',sans-serif;color:#000;white-space:nowrap;letter-spacing:-0.12px;">dc<span style="margin-right:-1.9px">_</span>record<span style="margin-right:-1.9px">_</span>situation</div>
<svg class="a" style="left:67px;top:119.1px" width="5" height="8"><path d="M0 0V8L4.500 4Z" fill="#404040"/></svg>
<svg class="a" style="left:81px;top:116.6px" width="18" height="13"><path d="M1.200 4C1.200 1.500 3 .6 5 .7 6.800 .8 7.800 2 9.300 1.900 10.800 1.800 11.800 .7 13.500 .7 15.500 .7 16.600 1.800 16.700 4 16.800 5.500 16.800 7.500 15.800 8.300 14.500 9 13.200 6.400 10.500 6.300 8 6.300 5.800 10.800 3.800 11.200 2 11.500 1.300 9.500 1.200 7.500Z" fill="#e2e2e2" stroke="#a4a4a4" stroke-width=".9"/></svg>
<div class="a" style="left:104px;top:114.30px;font:13.4px/19px 'Liberation Sans',sans-serif;color:#000;white-space:nowrap;letter-spacing:-0.12px;">hex</div>
<svg class="a" style="left:67px;top:138.1px" width="5" height="8"><path d="M0 0V8L4.500 4Z" fill="#404040"/></svg>
<svg class="a" style="left:81px;top:135.6px" width="18" height="13"><path d="M1.200 4C1.200 1.500 3 .6 5 .7 6.800 .8 7.800 2 9.300 1.900 10.800 1.800 11.800 .7 13.500 .7 15.500 .7 16.600 1.800 16.700 4 16.800 5.500 16.800 7.500 15.800 8.300 14.500 9 13.200 6.400 10.500 6.300 8 6.300 5.800 10.800 3.800 11.200 2 11.500 1.300 9.500 1.200 7.500Z" fill="#e2e2e2" stroke="#a4a4a4" stroke-width=".9"/></svg>
<div class="a" style="left:104px;top:133.30px;font:13.4px/19px 'Liberation Sans',sans-serif;color:#000;white-space:nowrap;letter-spacing:-0.12px;">hex<span style="margin-right:-1.9px">_</span>donghai<span style="margin-right:-1.9px">_</span>50km</div>
<svg class="a" style="left:67px;top:157.1px" width="5" height="8"><path d="M0 0V8L4.500 4Z" fill="#404040"/></svg>
<svg class="a" style="left:81px;top:154.6px" width="18" height="13"><path d="M1.200 4C1.200 1.500 3 .6 5 .7 6.800 .8 7.800 2 9.300 1.900 10.800 1.800 11.800 .7 13.500 .7 15.500 .7 16.600 1.800 16.700 4 16.800 5.500 16.800 7.500 15.800 8.300 14.500 9 13.200 6.400 10.500 6.300 8 6.300 5.800 10.800 3.800 11.200 2 11.500 1.300 9.500 1.200 7.500Z" fill="#e2e2e2" stroke="#a4a4a4" stroke-width=".9"/></svg>
<div class="a" style="left:104px;top:152.30px;font:13.4px/19px 'Liberation Sans',sans-serif;color:#000;white-space:nowrap;letter-spacing:-0.12px;">hex<span style="margin-right:-1.9px">_</span>guandao<span style="margin-right:-1.9px">_</span>1km</div>
<svg class="a" style="left:67px;top:176.1px" width="5" height="8"><path d="M0 0V8L4.500 4Z" fill="#404040"/></svg>
<svg class="a" style="left:81px;top:173.6px" width="18" height="13"><path d="M1.200 4C1.200 1.500 3 .6 5 .7 6.800 .8 7.800 2 9.300 1.900 10.800 1.800 11.800 .7 13.500 .7 15.500 .7 16.600 1.800 16.700 4 16.800 5.500 16.800 7.500 15.800 8.300 14.500 9 13.200 6.400 10.500 6.300 8 6.300 5.800 10.800 3.800 11.200 2 11.500 1.300 9.500 1.200 7.500Z" fill="#e2e2e2" stroke="#a4a4a4" stroke-width=".9"/></svg>
<div class="a" style="left:104px;top:171.30px;font:13.4px/19px 'Liberation Sans',sans-serif;color:#000;white-space:nowrap;letter-spacing:-0.12px;">hex<span style="margin-right:-1.9px">_</span>guandao<span style="margin-right:-1.9px">_</span>5km</div>
<svg class="a" style="left:67px;top:195.1px" width="5" height="8"><path d="M0 0V8L4.500 4Z" fill="#404040"/></svg>
<svg class="a" style="left:81px;top:192.6px" width="18" height="13"><path d="M1.200 4C1.200 1.500 3 .6 5 .7 6.800 .8 7.800 2 9.300 1.900 10.800 1.800 11.800 .7 13.500 .7 15.500 .7 16.600 1.800 16.700 4 16.800 5.500 16.800 7.500 15.800 8.300 14.500 9 13.200 6.400 10.500 6.300 8 6.300 5.800 10.800 3.800 11.200 2 11.500 1.300 9.500 1.200 7.500Z" fill="#e2e2e2" stroke="#a4a4a4" stroke-width=".9"/></svg>
<div class="a" style="left:104px;top:190.30px;font:13.4px/19px 'Liberation Sans',sans-serif;color:#000;white-space:nowrap;letter-spacing:-0.12px;">hex<span style="margin-right:-1.9px">_</span>guizhou<span style="margin-right:-1.9px">_</span>5m</div>
<svg class="a" style="left:67px;top:214.1px" width="5" height="8"><path d="M0 0V8L4.500 4Z" fill="#404040"/></svg>
<svg class="a" style="left:81px;top:211.6px" width="18" height="13"><path d="M1.200 4C1.200 1.500 3 .6 5 .7 6.800 .8 7.800 2 9.300 1.900 10.800 1.800 11.800 .7 13.500 .7 15.500 .7 16.600 1.800 16.700 4 16.800 5.500 16.800 7.500 15.800 8.300 14.500 9 13.200 6.400 10.500 6.300 8 6.300 5.800 10.800 3.800 11.200 2 11.500 1.300 9.500 1.200 7.500Z" fill="#e2e2e2" stroke="#a4a4a4" stroke-width=".9"/></svg>
<div class="a" style="left:104px;top:209.30px;font:13.4px/19px 'Liberation Sans',sans-serif;color:#000;white-space:nowrap;letter-spacing:-0.12px;">hex<span style="margin-right:-1.9px">_</span>mazuda<span style="margin-right:-1.9px">_</span>10km</div>
<svg class="a" style="left:67px;top:233.1px" width="5" height="8"><path d="M0 0V8L4.500 4Z" fill="#404040"/></svg>
<svg class="a" style="left:81px;top:230.6px" width="18" height="13"><path d="M1.200 4C1.200 1.500 3 .6 5 .7 6.800 .8 7.800 2 9.300 1.900 10.800 1.800 11.800 .7 13.500 .7 15.500 .7 16.600 1.800 16.700 4 16.800 5.500 16.800 7.500 15.800 8.300 14.500 9 13.200 6.400 10.500 6.300 8 6.300 5.800 10.800 3.800 11.200 2 11.500 1.300 9.500 1.200 7.500Z" fill="#e2e2e2" stroke="#a4a4a4" stroke-width=".9"/></svg>
<div class="a" style="left:104px;top:228.30px;font:13.4px/19px 'Liberation Sans',sans-serif;color:#000;white-space:nowrap;letter-spacing:-0.12px;">hex<span style="margin-right:-1.9px">_</span>mazuda<span style="margin-right:-1.9px">_</span>5km</div>
<svg class="a" style="left:67px;top:252.10000000000002px" width="5" height="8"><path d="M0 0V8L4.500 4Z" fill="#404040"/></svg>
<svg class="a" style="left:81px;top:249.60000000000002px" width="18" height="13"><path d="M1.200 4C1.200 1.500 3 .6 5 .7 6.800 .8 7.800 2 9.300 1.900 10.800 1.800 11.800 .7 13.500 .7 15.500 .7 16.600 1.800 16.700 4 16.800 5.500 16.800 7.500 15.800 8.300 14.500 9 13.200 6.400 10.500 6.300 8 6.300 5.800 10.800 3.800 11.200 2 11.500 1.300 9.500 1.200 7.500Z" fill="#e2e2e2" stroke="#a4a4a4" stroke-width=".9"/></svg>
<div class="a" style="left:104px;top:247.30px;font:13.4px/19px 'Liberation Sans',sans-serif;color:#000;white-space:nowrap;letter-spacing:-0.12px;">hex<span style="margin-right:-1.9px">_</span>nanhai<span style="margin-right:-1.9px">_</span>50km</div>
<svg class="a" style="left:67px;top:271.1px" width="5" height="8"><path d="M0 0V8L4.500 4Z" fill="#404040"/></svg>
<svg class="a" style="left:81px;top:268.6px" width="18" height="13"><path d="M1.200 4C1.200 1.500 3 .6 5 .7 6.800 .8 7.800 2 9.300 1.900 10.800 1.800 11.800 .7 13.500 .7 15.500 .7 16.600 1.800 16.700 4 16.800 5.500 16.800 7.500 15.800 8.300 14.500 9 13.200 6.400 10.500 6.300 8 6.300 5.800 10.800 3.800 11.200 2 11.500 1.300 9.500 1.200 7.500Z" fill="#e2e2e2" stroke="#a4a4a4" stroke-width=".9"/></svg>
<div class="a" style="left:104px;top:266.30px;font:13.4px/19px 'Liberation Sans',sans-serif;color:#000;white-space:nowrap;letter-spacing:-0.12px;">hex<span style="margin-right:-1.9px">_</span>taihai<span style="margin-right:-1.9px">_</span>10km</div>
<svg class="a" style="left:67px;top:290.1px" width="5" height="8"><path d="M0 0V8L4.500 4Z" fill="#404040"/></svg>
<svg class="a" style="left:81px;top:287.6px" width="18" height="13"><path d="M1.200 4C1.200 1.500 3 .6 5 .7 6.800 .8 7.800 2 9.300 1.900 10.800 1.800 11.800 .7 13.500 .7 15.500 .7 16.600 1.800 16.700 4 16.800 5.500 16.800 7.500 15.800 8.300 14.500 9 13.200 6.400 10.500 6.300 8 6.300 5.800 10.800 3.800 11.200 2 11.500 1.300 9.500 1.200 7.500Z" fill="#e2e2e2" stroke="#a4a4a4" stroke-width=".9"/></svg>
<div class="a" style="left:104px;top:285.30px;font:13.4px/19px 'Liberation Sans',sans-serif;color:#000;white-space:nowrap;letter-spacing:-0.12px;">hex<span style="margin-right:-1.9px">_</span>taihai<span style="margin-right:-1.9px">_</span>50km</div>
<svg class="a" style="left:67px;top:309.1px" width="5" height="8"><path d="M0 0V8L4.500 4Z" fill="#404040"/></svg>
<svg class="a" style="left:81px;top:306.6px" width="18" height="13"><path d="M1.200 4C1.200 1.500 3 .6 5 .7 6.800 .8 7.800 2 9.300 1.900 10.800 1.800 11.800 .7 13.500 .7 15.500 .7 16.600 1.800 16.700 4 16.800 5.500 16.800 7.500 15.800 8.300 14.500 9 13.200 6.400 10.500 6.300 8 6.300 5.800 10.800 3.800 11.200 2 11.500 1.300 9.500 1.200 7.500Z" fill="#e2e2e2" stroke="#a4a4a4" stroke-width=".9"/></svg>
<div class="a" style="left:104px;top:304.30px;font:13.4px/19px 'Liberation Sans',sans-serif;color:#000;white-space:nowrap;letter-spacing:-0.12px;">hex<span style="margin-right:-1.9px">_</span>xinanda<span style="margin-right:-1.9px">_</span>50km</div>
<svg class="a" style="left:67px;top:328.1px" width="5" height="8"><path d="M0 0V8L4.500 4Z" fill="#404040"/></svg>
<svg class="a" style="left:81px;top:325.6px" width="18" height="13"><path d="M1.200 4C1.200 1.500 3 .6 5 .7 6.800 .8 7.800 2 9.300 1.900 10.800 1.800 11.800 .7 13.500 .7 15.500 .7 16.600 1.800 16.700 4 16.800 5.500 16.800 7.500 15.800 8.300 14.500 9 13.200 6.400 10.500 6.300 8 6.300 5.800 10.800 3.800 11.200 2 11.500 1.300 9.500 1.200 7.500Z" fill="#e2e2e2" stroke="#a4a4a4" stroke-width=".9"/></svg>
<div class="a" style="left:104px;top:323.30px;font:13.4px/19px 'Liberation Sans',sans-serif;color:#000;white-space:nowrap;letter-spacing:-0.12px;">hex<span style="margin-right:-1.9px">_</span>xinanxiao<span style="margin-right:-1.9px">_</span>20m</div>
<div class="a" style="left:0px;top:342.0px;width:203px;height:19px;background:#f0f0f0"></div>
<svg class="a" style="left:67px;top:347.1px" width="5" height="8"><path d="M0 0V8L4.500 4Z" fill="#404040"/></svg>
<svg class="a" style="left:81px;top:344.6px" width="18" height="13"><path d="M1.200 4C1.200 1.500 3 .6 5 .7 6.800 .8 7.800 2 9.300 1.900 10.800 1.800 11.800 .7 13.500 .7 15.500 .7 16.600 1.800 16.700 4 16.800 5.500 16.800 7.500 15.800 8.300 14.500 9 13.200 6.400 10.500 6.300 8 6.300 5.800 10.800 3.800 11.200 2 11.500 1.300 9.500 1.200 7.500Z" fill="#8fb8e0" stroke="#5d8fc4" stroke-width=".9"/></svg>
<div class="a" style="left:104px;top:342.30px;font:13.4px/19px 'Liberation Sans',sans-serif;color:#000;white-space:nowrap;letter-spacing:-0.12px;">hex<span style="margin-right:-1.9px">_</span>xinjiang<span style="margin-right:-1.9px">_</span>10m</div>
<svg class="a" style="left:67px;top:366.1px" width="5" height="8"><path d="M0 0V8L4.500 4Z" fill="#404040"/></svg>
<svg class="a" style="left:84px;top:362.1px" width="14" height="14"><g fill="#fff" stroke="#8a8a8a" stroke-width=".9"><circle cx="2" cy="11.500" r="1.300"/><circle cx="4.500" cy="5" r="1.300"/><circle cx="11" cy="2" r="1.300"/></g></svg>
<div class="a" style="left:104px;top:361.30px;font:13.4px/19px 'Liberation Sans',sans-serif;color:#000;white-space:nowrap;letter-spacing:-0.12px;">sc<span style="margin-right:-1.9px">_</span>compose</div>
<svg class="a" style="left:18px;top:379.1px" width="22" height="18"><path d="M4 2.200C10 2 17 4 19.800 10L16 13H7.500C7 8.500 5.500 5 4 2.200Z" fill="#6b96c8" stroke="#5a86b8" stroke-width=".6"/><path d="M7.500 3C9.500 6 10.500 9.500 10.700 13M11 3.800C13 6.500 13.800 9.500 13.900 13M14.500 5.200C16 7.500 16.600 10 16.700 12.500" fill="none" stroke="#4a76a8" stroke-width=".8"/></svg>
<div class="a" style="left:45px;top:380.30px;font:13.4px/19px 'Liberation Sans',sans-serif;color:#000;white-space:nowrap;letter-spacing:0.1px;">MSSQL</div>
</div>
<div class="a" style="left:205px;top:213px;width:14px;height:391px;background:#e6e6e6;border-left:1px solid #d4d4d4"></div>
<div class="a" style="left:205px;top:213px;width:14px;height:13px;background:#fcfcfc"></div>
<div class="a" style="left:205px;top:590px;width:14px;height:14px;background:#fcfcfc"></div>
<div class="a" style="left:205px;top:323px;width:14px;height:162px;background:#fbfbfb;border-top:1px solid #d0d0d0;border-bottom:1px solid #d0d0d0"></div>
<svg class="a" style="left:208px;top:217px" width="9" height="5"><path d="M0 5H9L4.500 0Z" fill="#505050"/></svg>
<svg class="a" style="left:208px;top:594px" width="9" height="5"><path d="M0 0H9L4.500 5Z" fill="#505050"/></svg>
<div class="a" style="left:3px;top:604px;width:202px;height:14px;background:#fbfbfb;border-top:1px solid #d0d0d0;border-bottom:1px solid #d0d0d0"></div>
<div class="a" style="left:174px;top:604px;width:18px;height:14px;background:#e6e6e6;border-left:1px solid #d0d0d0"></div>
<div class="a" style="left:16px;top:604px;width:1px;height:14px;background:#d8d8d8"></div>
<div class="a" style="left:192px;top:604px;width:1px;height:14px;background:#d8d8d8"></div>
<div class="a" style="left:205px;top:604px;width:14px;height:14px;background:#f0f0f0"></div>
<svg class="a" style="left:6px;top:607px" width="5" height="9"><path d="M5 0V9L0 4.500Z" fill="#404040"/></svg>
<svg class="a" style="left:196px;top:607px" width="5" height="9"><path d="M0 0V9L5 4.500Z" fill="#404040"/></svg>
<div class="a" style="left:2px;top:618px;width:217px;height:1px;background:#a0a0a0"></div>
<div class="a" style="left:104px;top:621px;width:18px;height:1px;background-image:linear-gradient(90deg,#b8b8b8 1px,transparent 1px);background-size:3px 1px"></div>
<svg class="a" style="left:4.60px;top:626.56px" width="26" height="16.6" viewBox="0 -12.80 26 16.6"><text class="cj" x="0" y="0" font-size="12" fill="#000">图层</text></svg>
<svg class="a" style="left:193px;top:629px" width="26" height="11"><rect x="0.6" y="0.6" width="10" height="10.200" rx="2.400" fill="#f4f4f4" stroke="#5a5856" stroke-width="1.200"/><rect x="2.500" y="4.500" width="4" height="4" rx="1" fill="none" stroke="#444"/><path d="M4.500 4V3.200q0-.7.7-.7h2.600q.7 0 .7.7v2.600q0 .7-.7.7H7" fill="none" stroke="#444"/><rect x="14.600" y="0.6" width="10" height="10.200" rx="2.400" fill="#f4f4f4" stroke="#5a5856" stroke-width="1.200"/><path d="M17.200 3.300l4.800 4.800M22 3.300l-4.800 4.800" stroke="#4a4846" stroke-width="1.900"/></svg>
<div class="a" style="left:2px;top:675px;width:217px;height:120px;background:#fff;border:1px solid #a0a0a0;border-right:none"></div>
<svg class="a" style="left:25px;top:679px" width="14" height="14"><rect x=".5" y=".5" width="13" height="13" fill="#fff" stroke="#333"/><path d="M3 7l2.500 3L11 3.500" fill="none" stroke="#000" stroke-width="1.600"/></svg>
<div class="a" style="left:45px;top:677px;width:16px;height:16px;background:#7d8b8f;border:1px solid #30363a"></div>
<div class="a" style="left:67px;top:676.50px;font:13.2px/18px 'Liberation Sans',sans-serif;color:#000;white-space:nowrap;letter-spacing:-0.35px;font-weight:bold;"><u>hex_xinjiang_10m</u></div>
<div class="a" style="left:5px;top:798px;width:200px;height:22px;background:#fff;border:1px solid #a8a8a8;border-radius:3px"></div>
<svg class="a" style="left:13px;top:802px" width="14" height="14"><circle cx="5.500" cy="5.500" r="4" fill="none" stroke="#8a8a8a" stroke-width="1.400"/><path d="M8.500 8.500L12.500 12.500" stroke="#8a8a8a" stroke-width="1.600"/></svg>
<svg class="a" style="left:33.00px;top:801.56px" width="62" height="15.6" viewBox="0 -12.00 62 15.6"><text class="cj" x="0" y="0" font-size="12" fill="#777">键入以定位</text></svg>
<div class="a" style="left:93px;top:801px;font:10.5px/16px 'Liberation Mono',monospace;letter-spacing:-0.3px;color:#777;white-space:nowrap;transform:scaleY(1.13)">(Ctrl+K)</div>
<svg class="a" style="left:227px;top:163px;overflow:hidden" width="851" height="631" viewBox="227 163 851 631">
<rect x="227" y="163" width="851" height="631" fill="#7d8b8f"/>
<path d="M212.8 150.7L229.4 179.5M262.8 179.5L229.4 179.5M229.4 179.5L212.8 208.4M212.8 208.4L229.4 237.3M279.4 150.6L262.8 179.5M262.8 179.5L279.4 208.4M262.8 237.3L229.4 237.3M229.4 237.3L212.8 266.1M212.8 266.1L229.4 295.0M312.8 208.4L279.4 208.4M279.4 208.4L262.8 237.2M262.8 237.2L279.4 266.1M262.8 295.0L229.4 295.0M229.4 295.0L212.8 323.9M212.8 323.9L229.4 352.7M312.8 266.1L279.4 266.1M279.4 266.1L262.8 295.0M262.8 295.0L279.4 323.8M262.8 352.7L229.4 352.7M229.4 352.7L212.8 381.6M212.8 381.6L229.4 410.5M312.8 323.8L279.4 323.8M279.4 323.8L262.8 352.7M262.8 352.7L279.4 381.6M262.8 410.5L229.4 410.5M229.4 410.5L212.8 439.3M212.8 439.3L229.4 468.2M312.8 381.6L279.4 381.6M279.4 381.6L262.8 410.4M262.8 410.4L279.4 439.3M262.8 468.2L229.4 468.2M229.4 468.2L212.8 497.1M212.8 497.1L229.4 525.9M312.8 439.3L279.4 439.3M279.4 439.3L262.8 468.2M262.8 468.2L279.4 497.0M262.8 525.9L229.4 525.9M229.4 525.9L212.8 554.8M212.8 554.8L229.4 583.7M312.8 497.0L279.4 497.0M279.4 497.0L262.8 525.9M262.8 525.9L279.4 554.8M262.8 583.7L229.4 583.7M229.4 583.7L212.8 612.5M212.8 612.5L229.4 641.4M312.8 554.8L279.4 554.8M279.4 554.8L262.8 583.6M262.8 583.6L279.4 612.5M262.8 641.4L229.4 641.4M229.4 641.4L212.8 670.3M212.8 670.3L229.4 699.1M312.8 612.5L279.4 612.5M279.4 612.5L262.8 641.4M262.8 641.4L279.4 670.2M262.8 699.1L229.4 699.1M229.4 699.1L212.8 728.0M212.8 728.0L229.4 756.9M312.8 670.2L279.4 670.2M279.4 670.2L262.8 699.1M262.8 699.1L279.4 728.0M262.8 756.9L229.4 756.9M229.4 756.9L212.8 785.8M212.8 785.8L229.4 814.6M312.8 728.0L279.4 728.0M279.4 728.0L262.8 756.9M262.8 756.9L279.4 785.7M312.8 785.7L279.4 785.7M279.4 785.7L262.8 814.6M312.8 150.7L329.4 179.5M362.8 179.5L329.4 179.5M329.4 179.5L312.8 208.4M312.8 208.4L329.4 237.3M379.4 150.6L362.8 179.5M362.8 179.5L379.4 208.4M362.8 237.3L329.4 237.3M329.4 237.3L312.8 266.1M312.8 266.1L329.4 295.0M412.8 208.4L379.4 208.4M379.4 208.4L362.8 237.2M362.8 237.2L379.4 266.1M362.8 295.0L329.4 295.0M329.4 295.0L312.8 323.9M312.8 323.9L329.4 352.7M412.8 266.1L379.4 266.1M379.4 266.1L362.8 295.0M362.8 295.0L379.4 323.8M362.8 352.7L329.4 352.7M329.4 352.7L312.8 381.6M312.8 381.6L329.4 410.5M412.8 323.8L379.4 323.8M379.4 323.8L362.8 352.7M362.8 352.7L379.4 381.6M362.8 410.5L329.4 410.5M329.4 410.5L312.8 439.3M312.8 439.3L329.4 468.2M412.8 381.6L379.4 381.6M379.4 381.6L362.8 410.4M362.8 410.4L379.4 439.3M362.8 468.2L329.4 468.2M329.4 468.2L312.8 497.1M312.8 497.1L329.4 525.9M412.8 439.3L379.4 439.3M379.4 439.3L362.8 468.2M362.8 468.2L379.4 497.0M362.8 525.9L329.4 525.9M329.4 525.9L312.8 554.8M312.8 554.8L329.4 583.7M412.8 497.0L379.4 497.0M379.4 497.0L362.8 525.9M362.8 525.9L379.4 554.8M362.8 583.7L329.4 583.7M329.4 583.7L312.8 612.5M312.8 612.5L329.4 641.4M412.8 554.8L379.4 554.8M379.4 554.8L362.8 583.6M362.8 583.6L379.4 612.5M362.8 641.4L329.4 641.4M329.4 641.4L312.8 670.3M312.8 670.3L329.4 699.1M412.8 612.5L379.4 612.5M379.4 612.5L362.8 641.4M362.8 641.4L379.4 670.2M362.8 699.1L329.4 699.1M329.4 699.1L312.8 728.0M312.8 728.0L329.4 756.9M412.8 670.2L379.4 670.2M379.4 670.2L362.8 699.1M362.8 699.1L379.4 728.0M362.8 756.9L329.4 756.9M329.4 756.9L312.8 785.8M312.8 785.8L329.4 814.6M412.8 728.0L379.4 728.0M379.4 728.0L362.8 756.9M362.8 756.9L379.4 785.7M412.8 785.7L379.4 785.7M379.4 785.7L362.8 814.6M412.8 150.7L429.4 179.5M462.8 179.5L429.4 179.5M429.4 179.5L412.8 208.4M412.8 208.4L429.4 237.3M479.4 150.6L462.8 179.5M462.8 179.5L479.4 208.4M462.8 237.3L429.4 237.3M429.4 237.3L412.8 266.1M412.8 266.1L429.4 295.0M512.8 208.4L479.4 208.4M479.4 208.4L462.8 237.2M462.8 237.2L479.4 266.1M462.8 295.0L429.4 295.0M429.4 295.0L412.8 323.9M412.8 323.9L429.4 352.7M512.8 266.1L479.4 266.1M479.4 266.1L462.8 295.0M462.8 295.0L479.4 323.8M462.8 352.7L429.4 352.7M429.4 352.7L412.8 381.6M412.8 381.6L429.4 410.5M512.8 323.8L479.4 323.8M479.4 323.8L462.8 352.7M462.8 352.7L479.4 381.6M462.8 410.5L429.4 410.5M429.4 410.5L412.8 439.3M412.8 439.3L429.4 468.2M512.8 381.6L479.4 381.6M479.4 381.6L462.8 410.4M462.8 410.4L479.4 439.3M462.8 468.2L429.4 468.2M429.4 468.2L412.8 497.1M412.8 497.1L429.4 525.9M512.8 439.3L479.4 439.3M479.4 439.3L462.8 468.2M462.8 468.2L479.4 497.0M462.8 525.9L429.4 525.9M429.4 525.9L412.8 554.8M412.8 554.8L429.4 583.7M512.8 497.0L479.4 497.0M479.4 497.0L462.8 525.9M462.8 525.9L479.4 554.8M462.8 583.7L429.4 583.7M429.4 583.7L412.8 612.5M412.8 612.5L429.4 641.4M512.8 554.8L479.4 554.8M479.4 554.8L462.8 583.6M462.8 583.6L479.4 612.5M462.8 641.4L429.4 641.4M429.4 641.4L412.8 670.3M412.8 670.3L429.4 699.1M512.8 612.5L479.4 612.5M479.4 612.5L462.8 641.4M462.8 641.4L479.4 670.2M462.8 699.1L429.4 699.1M429.4 699.1L412.8 728.0M412.8 728.0L429.4 756.9M512.8 670.2L479.4 670.2M479.4 670.2L462.8 699.1M462.8 699.1L479.4 728.0M462.8 756.9L429.4 756.9M429.4 756.9L412.8 785.8M412.8 785.8L429.4 814.6M512.8 728.0L479.4 728.0M479.4 728.0L462.8 756.9M462.8 756.9L479.4 785.7M512.8 785.7L479.4 785.7M479.4 785.7L462.8 814.6M512.8 150.7L529.4 179.5M562.8 179.5L529.4 179.5M529.4 179.5L512.8 208.4M512.8 208.4L529.4 237.3M579.4 150.6L562.8 179.5M562.8 179.5L579.4 208.4M562.8 237.3L529.4 237.3M529.4 237.3L512.8 266.1M512.8 266.1L529.4 295.0M612.8 208.4L579.4 208.4M579.4 208.4L562.8 237.2M562.8 237.2L579.4 266.1M562.8 295.0L529.4 295.0M529.4 295.0L512.8 323.9M512.8 323.9L529.4 352.7M612.8 266.1L579.4 266.1M579.4 266.1L562.8 295.0M562.8 295.0L579.4 323.8M562.8 352.7L529.4 352.7M529.4 352.7L512.8 381.6M512.8 381.6L529.4 410.5M612.8 323.8L579.4 323.8M579.4 323.8L562.8 352.7M562.8 352.7L579.4 381.6M562.8 410.5L529.4 410.5M529.4 410.5L512.8 439.3M512.8 439.3L529.4 468.2M612.8 381.6L579.4 381.6M579.4 381.6L562.8 410.4M562.8 410.4L579.4 439.3M562.8 468.2L529.4 468.2M529.4 468.2L512.8 497.1M512.8 497.1L529.4 525.9M612.8 439.3L579.4 439.3M579.4 439.3L562.8 468.2M562.8 468.2L579.4 497.0M562.8 525.9L529.4 525.9M529.4 525.9L512.8 554.8M512.8 554.8L529.4 583.7M612.8 497.0L579.4 497.0M579.4 497.0L562.8 525.9M562.8 525.9L579.4 554.8M562.8 583.7L529.4 583.7M529.4 583.7L512.8 612.5M512.8 612.5L529.4 641.4M612.8 554.8L579.4 554.8M579.4 554.8L562.8 583.6M562.8 583.6L579.4 612.5M562.8 641.4L529.4 641.4M529.4 641.4L512.8 670.3M512.8 670.3L529.4 699.1M612.8 612.5L579.4 612.5M579.4 612.5L562.8 641.4M562.8 641.4L579.4 670.2M562.8 699.1L529.4 699.1M529.4 699.1L512.8 728.0M512.8 728.0L529.4 756.9M612.8 670.2L579.4 670.2M579.4 670.2L562.8 699.1M562.8 699.1L579.4 728.0M562.8 756.9L529.4 756.9M529.4 756.9L512.8 785.8M512.8 785.8L529.4 814.6M612.8 728.0L579.4 728.0M579.4 728.0L562.8 756.9M562.8 756.9L579.4 785.7M612.8 785.7L579.4 785.7M579.4 785.7L562.8 814.6M612.8 150.7L629.4 179.5M662.8 179.5L629.4 179.5M629.4 179.5L612.8 208.4M612.8 208.4L629.4 237.3M679.4 150.6L662.8 179.5M662.8 179.5L679.4 208.4M662.8 237.3L629.4 237.3M629.4 237.3L612.8 266.1M612.8 266.1L629.4 295.0M712.8 208.4L679.4 208.4M679.4 208.4L662.8 237.2M662.8 237.2L679.4 266.1M662.8 295.0L629.4 295.0M629.4 295.0L612.8 323.9M612.8 323.9L629.4 352.7M712.8 266.1L679.4 266.1M679.4 266.1L662.8 295.0M662.8 295.0L679.4 323.8M662.8 352.7L629.4 352.7M629.4 352.7L612.8 381.6M612.8 381.6L629.4 410.5M712.8 323.8L679.4 323.8M679.4 323.8L662.8 352.7M662.8 352.7L679.4 381.6M662.8 410.5L629.4 410.5M629.4 410.5L612.8 439.3M612.8 439.3L629.4 468.2M712.8 381.6L679.4 381.6M679.4 381.6L662.8 410.4M662.8 410.4L679.4 439.3M662.8 468.2L629.4 468.2M629.4 468.2L612.8 497.1M612.8 497.1L629.4 525.9M712.8 439.3L679.4 439.3M679.4 439.3L662.8 468.2M662.8 468.2L679.4 497.0M662.8 525.9L629.4 525.9M629.4 525.9L612.8 554.8M612.8 554.8L629.4 583.7M712.8 497.0L679.4 497.0M679.4 497.0L662.8 525.9M662.8 525.9L679.4 554.8M662.8 583.7L629.4 583.7M629.4 583.7L612.8 612.5M612.8 612.5L629.4 641.4M712.8 554.8L679.4 554.8M679.4 554.8L662.8 583.6M662.8 583.6L679.4 612.5M662.8 641.4L629.4 641.4M629.4 641.4L612.8 670.3M612.8 670.3L629.4 699.1M712.8 612.5L679.4 612.5M679.4 612.5L662.8 641.4M662.8 641.4L679.4 670.2M662.8 699.1L629.4 699.1M629.4 699.1L612.8 728.0M612.8 728.0L629.4 756.9M712.8 670.2L679.4 670.2M679.4 670.2L662.8 699.1M662.8 699.1L679.4 728.0M662.8 756.9L629.4 756.9M629.4 756.9L612.8 785.8M612.8 785.8L629.4 814.6M712.8 728.0L679.4 728.0M679.4 728.0L662.8 756.9M662.8 756.9L679.4 785.7M712.8 785.7L679.4 785.7M679.4 785.7L662.8 814.6M712.8 150.7L729.4 179.5M762.8 179.5L729.4 179.5M729.4 179.5L712.8 208.4M712.8 208.4L729.4 237.3M779.4 150.6L762.8 179.5M762.8 179.5L779.4 208.4M762.8 237.3L729.4 237.3M729.4 237.3L712.8 266.1M712.8 266.1L729.4 295.0M812.8 208.4L779.4 208.4M779.4 208.4L762.8 237.2M762.8 237.2L779.4 266.1M762.8 295.0L729.4 295.0M729.4 295.0L712.8 323.9M712.8 323.9L729.4 352.7M812.8 266.1L779.4 266.1M779.4 266.1L762.8 295.0M762.8 295.0L779.4 323.8M762.8 352.7L729.4 352.7M729.4 352.7L712.8 381.6M712.8 381.6L729.4 410.5M812.8 323.8L779.4 323.8M779.4 323.8L762.8 352.7M762.8 352.7L779.4 381.6M762.8 410.5L729.4 410.5M729.4 410.5L712.8 439.3M712.8 439.3L729.4 468.2M812.8 381.6L779.4 381.6M779.4 381.6L762.8 410.4M762.8 410.4L779.4 439.3M762.8 468.2L729.4 468.2M729.4 468.2L712.8 497.1M712.8 497.1L729.4 525.9M812.8 439.3L779.4 439.3M779.4 439.3L762.8 468.2M762.8 468.2L779.4 497.0M762.8 525.9L729.4 525.9M729.4 525.9L712.8 554.8M712.8 554.8L729.4 583.7M812.8 497.0L779.4 497.0M779.4 497.0L762.8 525.9M762.8 525.9L779.4 554.8M762.8 583.7L729.4 583.7M729.4 583.7L712.8 612.5M712.8 612.5L729.4 641.4M812.8 554.8L779.4 554.8M779.4 554.8L762.8 583.6M762.8 583.6L779.4 612.5M762.8 641.4L729.4 641.4M729.4 641.4L712.8 670.3M712.8 670.3L729.4 699.1M812.8 612.5L779.4 612.5M779.4 612.5L762.8 641.4M762.8 641.4L779.4 670.2M762.8 699.1L729.4 699.1M729.4 699.1L712.8 728.0M712.8 728.0L729.4 756.9M812.8 670.2L779.4 670.2M779.4 670.2L762.8 699.1M762.8 699.1L779.4 728.0M762.8 756.9L729.4 756.9M729.4 756.9L712.8 785.8M712.8 785.8L729.4 814.6M812.8 728.0L779.4 728.0M779.4 728.0L762.8 756.9M762.8 756.9L779.4 785.7M812.8 785.7L779.4 785.7M779.4 785.7L762.8 814.6M812.8 150.7L829.4 179.5M862.8 179.5L829.4 179.5M829.4 179.5L812.8 208.4M812.8 208.4L829.4 237.3M879.4 150.6L862.8 179.5M862.8 179.5L879.4 208.4M862.8 237.3L829.4 237.3M829.4 237.3L812.8 266.1M812.8 266.1L829.4 295.0M912.8 208.4L879.4 208.4M879.4 208.4L862.8 237.2M862.8 237.2L879.4 266.1M862.8 295.0L829.4 295.0M829.4 295.0L812.8 323.9M812.8 323.9L829.4 352.7M912.8 266.1L879.4 266.1M879.4 266.1L862.8 295.0M862.8 295.0L879.4 323.8M862.8 352.7L829.4 352.7M829.4 352.7L812.8 381.6M812.8 381.6L829.4 410.5M912.8 323.8L879.4 323.8M879.4 323.8L862.8 352.7M862.8 352.7L879.4 381.6M862.8 410.5L829.4 410.5M829.4 410.5L812.8 439.3M812.8 439.3L829.4 468.2M912.8 381.6L879.4 381.6M879.4 381.6L862.8 410.4M862.8 410.4L879.4 439.3M862.8 468.2L829.4 468.2M829.4 468.2L812.8 497.1M812.8 497.1L829.4 525.9M912.8 439.3L879.4 439.3M879.4 439.3L862.8 468.2M862.8 468.2L879.4 497.0M862.8 525.9L829.4 525.9M829.4 525.9L812.8 554.8M812.8 554.8L829.4 583.7M912.8 497.0L879.4 497.0M879.4 497.0L862.8 525.9M862.8 525.9L879.4 554.8M862.8 583.7L829.4 583.7M829.4 583.7L812.8 612.5M812.8 612.5L829.4 641.4M912.8 554.8L879.4 554.8M879.4 554.8L862.8 583.6M862.8 583.6L879.4 612.5M862.8 641.4L829.4 641.4M829.4 641.4L812.8 670.3M812.8 670.3L829.4 699.1M912.8 612.5L879.4 612.5M879.4 612.5L862.8 641.4M862.8 641.4L879.4 670.2M862.8 699.1L829.4 699.1M829.4 699.1L812.8 728.0M812.8 728.0L829.4 756.9M912.8 670.2L879.4 670.2M879.4 670.2L862.8 699.1M862.8 699.1L879.4 728.0M862.8 756.9L829.4 756.9M829.4 756.9L812.8 785.8M812.8 785.8L829.4 814.6M912.8 728.0L879.4 728.0M879.4 728.0L862.8 756.9M862.8 756.9L879.4 785.7M912.8 785.7L879.4 785.7M879.4 785.7L862.8 814.6M912.8 150.7L929.4 179.5M962.8 179.5L929.4 179.5M929.4 179.5L912.8 208.4M912.8 208.4L929.4 237.3M979.4 150.6L962.8 179.5M962.8 179.5L979.4 208.4M962.8 237.3L929.4 237.3M929.4 237.3L912.8 266.1M912.8 266.1L929.4 295.0M1012.8 208.4L979.4 208.4M979.4 208.4L962.8 237.2M962.8 237.2L979.4 266.1M962.8 295.0L929.4 295.0M929.4 295.0L912.8 323.9M912.8 323.9L929.4 352.7M1012.8 266.1L979.4 266.1M979.4 266.1L962.8 295.0M962.8 295.0L979.4 323.8M962.8 352.7L929.4 352.7M929.4 352.7L912.8 381.6M912.8 381.6L929.4 410.5M1012.8 323.8L979.4 323.8M979.4 323.8L962.8 352.7M962.8 352.7L979.4 381.6M962.8 410.5L929.4 410.5M929.4 410.5L912.8 439.3M912.8 439.3L929.4 468.2M1012.8 381.6L979.4 381.6M979.4 381.6L962.8 410.4M962.8 410.4L979.4 439.3M962.8 468.2L929.4 468.2M929.4 468.2L912.8 497.1M912.8 497.1L929.4 525.9M1012.8 439.3L979.4 439.3M979.4 439.3L962.8 468.2M962.8 468.2L979.4 497.0M962.8 525.9L929.4 525.9M929.4 525.9L912.8 554.8M912.8 554.8L929.4 583.7M1012.8 497.0L979.4 497.0M979.4 497.0L962.8 525.9M962.8 525.9L979.4 554.8M962.8 583.7L929.4 583.7M929.4 583.7L912.8 612.5M912.8 612.5L929.4 641.4M1012.8 554.8L979.4 554.8M979.4 554.8L962.8 583.6M962.8 583.6L979.4 612.5M962.8 641.4L929.4 641.4M929.4 641.4L912.8 670.3M912.8 670.3L929.4 699.1M1012.8 612.5L979.4 612.5M979.4 612.5L962.8 641.4M962.8 641.4L979.4 670.2M962.8 699.1L929.4 699.1M929.4 699.1L912.8 728.0M912.8 728.0L929.4 756.9M1012.8 670.2L979.4 670.2M979.4 670.2L962.8 699.1M962.8 699.1L979.4 728.0M962.8 756.9L929.4 756.9M929.4 756.9L912.8 785.8M912.8 785.8L929.4 814.6M1012.8 728.0L979.4 728.0M979.4 728.0L962.8 756.9M962.8 756.9L979.4 785.7M1012.8 785.7L979.4 785.7M979.4 785.7L962.8 814.6M1012.8 150.7L1029.4 179.5M1062.8 179.5L1029.4 179.5M1029.4 179.5L1012.8 208.4M1012.8 208.4L1029.4 237.3M1079.4 150.6L1062.8 179.5M1062.8 179.5L1079.4 208.4M1062.8 237.3L1029.4 237.3M1029.4 237.3L1012.8 266.1M1012.8 266.1L1029.4 295.0M1112.8 208.4L1079.4 208.4M1079.4 208.4L1062.8 237.2M1062.8 237.2L1079.4 266.1M1062.8 295.0L1029.4 295.0M1029.4 295.0L1012.8 323.9M1012.8 323.9L1029.4 352.7M1112.8 266.1L1079.4 266.1M1079.4 266.1L1062.8 295.0M1062.8 295.0L1079.4 323.8M1062.8 352.7L1029.4 352.7M1029.4 352.7L1012.8 381.6M1012.8 381.6L1029.4 410.5M1112.8 323.8L1079.4 323.8M1079.4 323.8L1062.8 352.7M1062.8 352.7L1079.4 381.6M1062.8 410.5L1029.4 410.5M1029.4 410.5L1012.8 439.3M1012.8 439.3L1029.4 468.2M1112.8 381.6L1079.4 381.6M1079.4 381.6L1062.8 410.4M1062.8 410.4L1079.4 439.3M1062.8 468.2L1029.4 468.2M1029.4 468.2L1012.8 497.1M1012.8 497.1L1029.4 525.9M1112.8 439.3L1079.4 439.3M1079.4 439.3L1062.8 468.2M1062.8 468.2L1079.4 497.0M1062.8 525.9L1029.4 525.9M1029.4 525.9L1012.8 554.8M1012.8 554.8L1029.4 583.7M1112.8 497.0L1079.4 497.0M1079.4 497.0L1062.8 525.9M1062.8 525.9L1079.4 554.8M1062.8 583.7L1029.4 583.7M1029.4 583.7L1012.8 612.5M1012.8 612.5L1029.4 641.4M1112.8 554.8L1079.4 554.8M1079.4 554.8L1062.8 583.6M1062.8 583.6L1079.4 612.5M1062.8 641.4L1029.4 641.4M1029.4 641.4L1012.8 670.3M1012.8 670.3L1029.4 699.1M1112.8 612.5L1079.4 612.5M1079.4 612.5L1062.8 641.4M1062.8 641.4L1079.4 670.2M1062.8 699.1L1029.4 699.1M1029.4 699.1L1012.8 728.0M1012.8 728.0L1029.4 756.9M1112.8 670.2L1079.4 670.2M1079.4 670.2L1062.8 699.1M1062.8 699.1L1079.4 728.0M1062.8 756.9L1029.4 756.9M1029.4 756.9L1012.8 785.8M1012.8 785.8L1029.4 814.6M1112.8 728.0L1079.4 728.0M1079.4 728.0L1062.8 756.9M1062.8 756.9L1079.4 785.7M1112.8 785.7L1079.4 785.7M1079.4 785.7L1062.8 814.6" stroke="#262a2c" stroke-width="1.05" fill="none"/>
<clipPath id="lc"><rect x="248" y="163" width="809.9" height="631"/></clipPath>
<g clip-path="url(#lc)" font-family="'Liberation Serif',serif" font-size="13.5" fill="#1d1d1d" text-anchor="middle" letter-spacing="0.5" text-rendering="geometricPrecision">
<text transform="translate(239.3 168.2) scale(.94 1)">001002</text>
<text transform="translate(239.3 205.2) scale(.94 1)">002002</text>
<text transform="translate(239.3 262.9) scale(.94 1)">003002</text>
<text transform="translate(239.3 320.7) scale(.94 1)">004002</text>
<text transform="translate(239.3 378.4) scale(.94 1)">005002</text>
<text transform="translate(239.3 436.1) scale(.94 1)">006002</text>
<text transform="translate(239.3 493.9) scale(.94 1)">007002</text>
<text transform="translate(239.3 551.6) scale(.94 1)">008002</text>
<text transform="translate(239.3 609.3) scale(.94 1)">009002</text>
<text transform="translate(239.3 667.1) scale(.94 1)">010002</text>
<text transform="translate(239.3 724.8) scale(.94 1)">011002</text>
<text transform="translate(239.3 774.1) scale(.94 1)">012002</text>
<text transform="translate(295.8 187.2) scale(.94 1)">001003</text>
<text transform="translate(295.8 240.8) scale(.94 1)">002003</text>
<text transform="translate(295.8 298.6) scale(.94 1)">003003</text>
<text transform="translate(295.8 356.3) scale(.94 1)">004003</text>
<text transform="translate(295.8 414.0) scale(.94 1)">005003</text>
<text transform="translate(295.8 471.8) scale(.94 1)">006003</text>
<text transform="translate(295.8 529.5) scale(.94 1)">007003</text>
<text transform="translate(295.8 587.2) scale(.94 1)">008003</text>
<text transform="translate(295.8 645.0) scale(.94 1)">009003</text>
<text transform="translate(295.8 702.7) scale(.94 1)">010003</text>
<text transform="translate(295.8 760.5) scale(.94 1)">011003</text>
<text transform="translate(274.8 799.8) scale(.94 1)">012003</text>
<text transform="translate(345.8 168.2) scale(.94 1)">001004</text>
<text transform="translate(345.8 212.0) scale(.94 1)">002004</text>
<text transform="translate(345.8 269.7) scale(.94 1)">003004</text>
<text transform="translate(345.8 327.5) scale(.94 1)">004004</text>
<text transform="translate(345.8 385.2) scale(.94 1)">005004</text>
<text transform="translate(345.8 442.9) scale(.94 1)">006004</text>
<text transform="translate(345.8 500.7) scale(.94 1)">007004</text>
<text transform="translate(345.8 558.4) scale(.94 1)">008004</text>
<text transform="translate(345.8 616.1) scale(.94 1)">009004</text>
<text transform="translate(345.8 673.9) scale(.94 1)">010004</text>
<text transform="translate(345.8 731.6) scale(.94 1)">011004</text>
<text transform="translate(345.8 780.9) scale(.94 1)">012004</text>
<text transform="translate(395.8 187.2) scale(.94 1)">001005</text>
<text transform="translate(395.8 240.8) scale(.94 1)">002005</text>
<text transform="translate(395.8 298.6) scale(.94 1)">003005</text>
<text transform="translate(395.8 356.3) scale(.94 1)">004005</text>
<text transform="translate(395.8 414.0) scale(.94 1)">005005</text>
<text transform="translate(395.8 471.8) scale(.94 1)">006005</text>
<text transform="translate(395.8 529.5) scale(.94 1)">007005</text>
<text transform="translate(395.8 587.2) scale(.94 1)">008005</text>
<text transform="translate(395.8 645.0) scale(.94 1)">009005</text>
<text transform="translate(395.8 702.7) scale(.94 1)">010005</text>
<text transform="translate(395.8 760.5) scale(.94 1)">011005</text>
<text transform="translate(374.8 799.8) scale(.94 1)">012005</text>
<text transform="translate(445.8 168.2) scale(.94 1)">001006</text>
<text transform="translate(445.8 212.0) scale(.94 1)">002006</text>
<text transform="translate(445.8 269.7) scale(.94 1)">003006</text>
<text transform="translate(445.8 327.5) scale(.94 1)">004006</text>
<text transform="translate(445.8 385.2) scale(.94 1)">005006</text>
<text transform="translate(445.8 442.9) scale(.94 1)">006006</text>
<text transform="translate(445.8 500.7) scale(.94 1)">007006</text>
<text transform="translate(445.8 558.4) scale(.94 1)">008006</text>
<text transform="translate(445.8 616.1) scale(.94 1)">009006</text>
<text transform="translate(445.8 673.9) scale(.94 1)">010006</text>
<text transform="translate(445.8 731.6) scale(.94 1)">011006</text>
<text transform="translate(445.8 780.9) scale(.94 1)">012006</text>
<text transform="translate(495.8 187.2) scale(.94 1)">001007</text>
<text transform="translate(495.8 240.8) scale(.94 1)">002007</text>
<text transform="translate(495.8 298.6) scale(.94 1)">003007</text>
<text transform="translate(495.8 356.3) scale(.94 1)">004007</text>
<text transform="translate(495.8 414.0) scale(.94 1)">005007</text>
<text transform="translate(495.8 471.8) scale(.94 1)">006007</text>
<text transform="translate(495.8 529.5) scale(.94 1)">007007</text>
<text transform="translate(495.8 587.2) scale(.94 1)">008007</text>
<text transform="translate(495.8 645.0) scale(.94 1)">009007</text>
<text transform="translate(495.8 702.7) scale(.94 1)">010007</text>
<text transform="translate(495.8 760.5) scale(.94 1)">011007</text>
<text transform="translate(474.8 799.8) scale(.94 1)">012007</text>
<text transform="translate(545.8 168.2) scale(.94 1)">001008</text>
<text transform="translate(545.8 212.0) scale(.94 1)">002008</text>
<text transform="translate(545.8 269.7) scale(.94 1)">003008</text>
<text transform="translate(545.8 327.5) scale(.94 1)">004008</text>
<text transform="translate(545.8 385.2) scale(.94 1)">005008</text>
<text transform="translate(545.8 442.9) scale(.94 1)">006008</text>
<text transform="translate(545.8 500.7) scale(.94 1)">007008</text>
<text transform="translate(545.8 558.4) scale(.94 1)">008008</text>
<text transform="translate(545.8 616.1) scale(.94 1)">009008</text>
<text transform="translate(545.8 673.9) scale(.94 1)">010008</text>
<text transform="translate(545.8 731.6) scale(.94 1)">011008</text>
<text transform="translate(545.8 780.9) scale(.94 1)">012008</text>
<text transform="translate(595.8 187.2) scale(.94 1)">001009</text>
<text transform="translate(595.8 240.8) scale(.94 1)">002009</text>
<text transform="translate(595.8 298.6) scale(.94 1)">003009</text>
<text transform="translate(595.8 356.3) scale(.94 1)">004009</text>
<text transform="translate(595.8 414.0) scale(.94 1)">005009</text>
<text transform="translate(595.8 471.8) scale(.94 1)">006009</text>
<text transform="translate(595.8 529.5) scale(.94 1)">007009</text>
<text transform="translate(595.8 587.2) scale(.94 1)">008009</text>
<text transform="translate(595.8 645.0) scale(.94 1)">009009</text>
<text transform="translate(595.8 702.7) scale(.94 1)">010009</text>
<text transform="translate(595.8 760.5) scale(.94 1)">011009</text>
<text transform="translate(574.8 799.8) scale(.94 1)">012009</text>
<text transform="translate(645.8 168.2) scale(.94 1)">001010</text>
<text transform="translate(645.8 212.0) scale(.94 1)">002010</text>
<text transform="translate(645.8 269.7) scale(.94 1)">003010</text>
<text transform="translate(645.8 327.5) scale(.94 1)">004010</text>
<text transform="translate(645.8 385.2) scale(.94 1)">005010</text>
<text transform="translate(645.8 442.9) scale(.94 1)">006010</text>
<text transform="translate(645.8 500.7) scale(.94 1)">007010</text>
<text transform="translate(645.8 558.4) scale(.94 1)">008010</text>
<text transform="translate(645.8 616.1) scale(.94 1)">009010</text>
<text transform="translate(645.8 673.9) scale(.94 1)">010010</text>
<text transform="translate(645.8 731.6) scale(.94 1)">011010</text>
<text transform="translate(645.8 780.9) scale(.94 1)">012010</text>
<text transform="translate(695.8 187.2) scale(.94 1)">001011</text>
<text transform="translate(695.8 240.8) scale(.94 1)">002011</text>
<text transform="translate(695.8 298.6) scale(.94 1)">003011</text>
<text transform="translate(695.8 356.3) scale(.94 1)">004011</text>
<text transform="translate(695.8 414.0) scale(.94 1)">005011</text>
<text transform="translate(695.8 471.8) scale(.94 1)">006011</text>
<text transform="translate(695.8 529.5) scale(.94 1)">007011</text>
<text transform="translate(695.8 587.2) scale(.94 1)">008011</text>
<text transform="translate(695.8 645.0) scale(.94 1)">009011</text>
<text transform="translate(695.8 702.7) scale(.94 1)">010011</text>
<text transform="translate(695.8 760.5) scale(.94 1)">011011</text>
<text transform="translate(716.2 799.8) scale(.94 1)">012011</text>
<text transform="translate(745.8 168.2) scale(.94 1)">001012</text>
<text transform="translate(745.8 212.0) scale(.94 1)">002012</text>
<text transform="translate(745.8 269.7) scale(.94 1)">003012</text>
<text transform="translate(745.8 327.5) scale(.94 1)">004012</text>
<text transform="translate(745.8 385.2) scale(.94 1)">005012</text>
<text transform="translate(745.8 442.9) scale(.94 1)">006012</text>
<text transform="translate(745.8 500.7) scale(.94 1)">007012</text>
<text transform="translate(745.8 558.4) scale(.94 1)">008012</text>
<text transform="translate(745.8 616.1) scale(.94 1)">009012</text>
<text transform="translate(745.8 673.9) scale(.94 1)">010012</text>
<text transform="translate(745.8 731.6) scale(.94 1)">011012</text>
<text transform="translate(745.8 780.9) scale(.94 1)">012012</text>
<text transform="translate(795.8 187.2) scale(.94 1)">001013</text>
<text transform="translate(795.8 240.8) scale(.94 1)">002013</text>
<text transform="translate(795.8 298.6) scale(.94 1)">003013</text>
<text transform="translate(795.8 356.3) scale(.94 1)">004013</text>
<text transform="translate(795.8 414.0) scale(.94 1)">005013</text>
<text transform="translate(795.8 471.8) scale(.94 1)">006013</text>
<text transform="translate(795.8 529.5) scale(.94 1)">007013</text>
<text transform="translate(795.8 587.2) scale(.94 1)">008013</text>
<text transform="translate(795.8 645.0) scale(.94 1)">009013</text>
<text transform="translate(795.8 702.7) scale(.94 1)">010013</text>
<text transform="translate(795.8 760.5) scale(.94 1)">011013</text>
<text transform="translate(816.2 799.8) scale(.94 1)">012013</text>
<text transform="translate(845.8 168.2) scale(.94 1)">001014</text>
<text transform="translate(845.8 212.0) scale(.94 1)">002014</text>
<text transform="translate(845.8 269.7) scale(.94 1)">003014</text>
<text transform="translate(845.8 327.5) scale(.94 1)">004014</text>
<text transform="translate(845.8 385.2) scale(.94 1)">005014</text>
<text transform="translate(845.8 442.9) scale(.94 1)">006014</text>
<text transform="translate(845.8 500.7) scale(.94 1)">007014</text>
<text transform="translate(845.8 558.4) scale(.94 1)">008014</text>
<text transform="translate(845.8 616.1) scale(.94 1)">009014</text>
<text transform="translate(845.8 673.9) scale(.94 1)">010014</text>
<text transform="translate(845.8 731.6) scale(.94 1)">011014</text>
<text transform="translate(845.8 780.9) scale(.94 1)">012014</text>
<text transform="translate(895.8 187.2) scale(.94 1)">001015</text>
<text transform="translate(895.8 240.8) scale(.94 1)">002015</text>
<text transform="translate(895.8 298.6) scale(.94 1)">003015</text>
<text transform="translate(895.8 356.3) scale(.94 1)">004015</text>
<text transform="translate(895.8 414.0) scale(.94 1)">005015</text>
<text transform="translate(895.8 471.8) scale(.94 1)">006015</text>
<text transform="translate(895.8 529.5) scale(.94 1)">007015</text>
<text transform="translate(895.8 587.2) scale(.94 1)">008015</text>
<text transform="translate(895.8 645.0) scale(.94 1)">009015</text>
<text transform="translate(895.8 702.7) scale(.94 1)">010015</text>
<text transform="translate(895.8 760.5) scale(.94 1)">011015</text>
<text transform="translate(916.2 799.8) scale(.94 1)">012015</text>
<text transform="translate(945.8 168.2) scale(.94 1)">001016</text>
<text transform="translate(945.8 212.0) scale(.94 1)">002016</text>
<text transform="translate(945.8 269.7) scale(.94 1)">003016</text>
<text transform="translate(945.8 327.5) scale(.94 1)">004016</text>
<text transform="translate(945.8 385.2) scale(.94 1)">005016</text>
<text transform="translate(945.8 442.9) scale(.94 1)">006016</text>
<text transform="translate(945.8 500.7) scale(.94 1)">007016</text>
<text transform="translate(945.8 558.4) scale(.94 1)">008016</text>
<text transform="translate(945.8 616.1) scale(.94 1)">009016</text>
<text transform="translate(945.8 673.9) scale(.94 1)">010016</text>
<text transform="translate(945.8 731.6) scale(.94 1)">011016</text>
<text transform="translate(945.8 780.9) scale(.94 1)">012016</text>
<text transform="translate(995.8 187.2) scale(.94 1)">001017</text>
<text transform="translate(995.8 240.8) scale(.94 1)">002017</text>
<text transform="translate(995.8 298.6) scale(.94 1)">003017</text>
<text transform="translate(995.8 356.3) scale(.94 1)">004017</text>
<text transform="translate(995.8 414.0) scale(.94 1)">005017</text>
<text transform="translate(995.8 471.8) scale(.94 1)">006017</text>
<text transform="translate(995.8 529.5) scale(.94 1)">007017</text>
<text transform="translate(995.8 587.2) scale(.94 1)">008017</text>
<text transform="translate(995.8 645.0) scale(.94 1)">009017</text>
<text transform="translate(995.8 702.7) scale(.94 1)">010017</text>
<text transform="translate(995.8 760.5) scale(.94 1)">011017</text>
<text transform="translate(1016.2 799.8) scale(.94 1)">012017</text>
<text transform="translate(1061.2 168.2) scale(.94 1)">001018</text>
<text transform="translate(1038.3 212.0) scale(.94 1)">002018</text>
<text transform="translate(1038.3 269.7) scale(.94 1)">003018</text>
<text transform="translate(1038.3 327.5) scale(.94 1)">004018</text>
<text transform="translate(1038.3 385.2) scale(.94 1)">005018</text>
<text transform="translate(1038.3 442.9) scale(.94 1)">006018</text>
<text transform="translate(1038.3 500.7) scale(.94 1)">007018</text>
<text transform="translate(1038.3 558.4) scale(.94 1)">008018</text>
<text transform="translate(1038.3 616.1) scale(.94 1)">009018</text>
<text transform="translate(1038.3 673.9) scale(.94 1)">010018</text>
<text transform="translate(1038.3 731.6) scale(.94 1)">011018</text>
<text transform="translate(1058.3 773.6) scale(.94 1)">012018</text>
</g>
</svg>
<div class="a" style="left:221px;top:160px;width:858px;height:3px;background:linear-gradient(#f2fbfb 1px,#f2f2f2 1px,#f2f2f2 2px,#aab3b6 2px)"></div>
<div class="a" style="left:221px;top:160px;width:5px;height:637px;background:linear-gradient(90deg,#f2fbfb 1px,#f0f0f0 1px,#f0f0f0 4px,#f6f6f6 4px)"></div>
<div class="a" style="left:226px;top:162px;width:1px;height:632px;background:#aab3b6"></div>
<div class="a" style="left:221px;top:794px;width:858px;height:3px;background:linear-gradient(#e2e4e4 1px,#f8f8f8 1px)"></div>
<div class="a" style="left:1078px;top:162px;width:1px;height:633px;background:#bcbcbc"></div>
<svg class="a" style="left:250.50px;top:801.56px" width="26" height="15.6" viewBox="0 -12.00 26 15.6"><text class="cj" x="0" y="0" font-size="12" fill="#000">坐标</text></svg>
<div class="a" style="left:276px;top:800px;width:129px;height:19px;background:#fff;border:1px solid #b4b4b4;border-radius:2px"></div>
<div class="a ss" style="left:283px;top:801px;font:11px/16px 'Liberation Sans',sans-serif;color:#000;white-space:nowrap;transform:translateY(1.7px) scaleY(1.14)"><span>8</span><span>7</span><span style="text-align:left;text-indent:1px">.</span><span>6</span><span>1</span><span>4</span><span>0</span><span>8</span><span>6</span><span style="text-align:left;text-indent:1px">,</span><span>4</span><span>3</span><span style="text-align:left;text-indent:1px">.</span><span>7</span><span>9</span><span>9</span><span>3</span><span>4</span><span>0</span></div>
<svg class="a" style="left:408px;top:800px" width="17" height="18"><g transform="rotate(-28 8 9)"><rect x="3.800" y="2.500" width="9" height="13.500" rx="4.200" fill="#dcdcdc" stroke="#1a1a1a" stroke-width="1.500"/><path d="M3.800 8H12.800M8.300 2.500V8" stroke="#1a1a1a" stroke-width="1.200"/><circle cx="8.300" cy="12" r="1.700" fill="#f4f4f4" stroke="#1a1a1a" stroke-width=".9"/><path d="M5 4.500L7 6M6.500 3.500L8 5.500" stroke="#1a1a1a" stroke-width=".8"/></g><path d="M12.500 3L15.800 1.200" stroke="#333" stroke-width="1"/></svg>
<svg class="a" style="left:438.50px;top:801.56px" width="35" height="15.6" viewBox="0 -12.00 35 15.6"><text class="cj" x="0" y="0" font-size="12" fill="#000" textLength="33.5" lengthAdjust="spacing">比例尺</text></svg>
<div class="a" style="left:475px;top:800px;width:83px;height:19px;background:#fff;border:1px solid #b4b4b4;border-radius:2px"></div>
<div class="a" style="left:536px;top:801px;width:1px;height:17px;background:#d0d0d0"></div>
<div class="a ss" style="left:479px;top:801px;font:11px/16px 'Liberation Sans',sans-serif;color:#000;white-space:nowrap;transform:translateY(1.7px) scaleY(1.14)"><span>1</span><span>:</span><span>3</span><span>3</span><span>6</span></div>
<svg class="a" style="left:542px;top:807px" width="8" height="5"><path d="M0 0H8L4 4.500Z" fill="#444"/></svg>
<svg class="a" style="left:568px;top:801px" width="14" height="16"><path d="M3.500 7V5Q3.500 1.500 7 1.500T10.500 5V7" fill="none" stroke="#8a8a8a" stroke-width="1.600"/><rect x="1.500" y="7" width="11" height="8" rx="1.200" fill="#9a9a9a" stroke="#777" stroke-width=".8"/></svg>
<svg class="a" style="left:590.00px;top:801.56px" width="36" height="15.6" viewBox="0 -12.00 36 15.6"><text class="cj" x="0" y="0" font-size="12" fill="#000" textLength="34.5" lengthAdjust="spacing">放大镜</text></svg>
<div class="a" style="left:627px;top:800px;width:91px;height:19px;background:#fff;border:1px solid #b4b4b4;border-radius:2px"></div>
<div class="a ss" style="left:631px;top:801px;font:11px/16px 'Liberation Sans',sans-serif;color:#000;white-space:nowrap;transform:translateY(1.7px) scaleY(1.14)"><span>1</span><span>0</span><span>0</span><span>%</span></div>
<div class="a" style="left:704px;top:801px;width:12px;height:17px;border:1px solid #e0e0e0;border-radius:1px"></div>
<svg class="a" style="left:707px;top:802px" width="7" height="14"><path d="M0 5.500H7L3.500 1.500ZM0 8.500H7L3.500 12.500Z" fill="#555"/></svg>
<svg class="a" style="left:728.50px;top:801.56px" width="46" height="15.6" viewBox="0 -12.00 46 15.6"><text class="cj" x="0" y="0" font-size="12" fill="#000" textLength="44" lengthAdjust="spacing">旋转角度</text></svg>
<div class="a" style="left:781px;top:800px;width:88px;height:19px;background:#fff;border:1px solid #b4b4b4;border-radius:2px"></div>
<div class="a ss" style="left:785px;top:801px;font:11px/16px 'Liberation Sans',sans-serif;color:#000;white-space:nowrap;transform:translateY(1.7px) scaleY(1.14)"><span>0</span><span style="text-align:left;text-indent:1px">.</span><span>0</span><span>°</span></div>
<div class="a" style="left:856px;top:801px;width:12px;height:17px;border:1px solid #e0e0e0;border-radius:1px"></div>
<svg class="a" style="left:859px;top:802px" width="7" height="14"><path d="M0 5.500H7L3.500 1.500ZM0 8.500H7L3.500 12.500Z" fill="#555"/></svg>
<svg class="a" style="left:877px;top:802.5px" width="13" height="13"><rect x=".5" y=".5" width="12" height="12" fill="#fff" stroke="#333"/><path d="M2.800 6.500l2.400 3L10.200 3" fill="none" stroke="#000" stroke-width="1.600"/></svg>
<svg class="a" style="left:895.50px;top:801.56px" width="24" height="15.6" viewBox="0 -12.00 24 15.6"><text class="cj" x="0" y="0" font-size="12" fill="#000" textLength="22.5" lengthAdjust="spacing">渲染</text></svg>
<svg class="a" style="left:934px;top:801.5px" width="15" height="15"><ellipse cx="7.500" cy="6.500" rx="6.800" ry="5.800" fill="#f4f4f4" stroke="#777" stroke-width=".9"/><ellipse cx="7.500" cy="6.500" rx="3" ry="5.800" fill="none" stroke="#888" stroke-width=".7"/><path d="M.8 6.500H14.200M1.800 3.500H13.200M1.800 9.500H13.200M7.500 .7V12.300" stroke="#888" stroke-width=".7"/><path d="M5 12.500H10L7.500 14.800Z" fill="#666"/></svg>
<div class="a" style="left:954px;top:801px;font:10.5px/16px 'Liberation Mono',monospace;letter-spacing:-0.3px;color:#222;white-space:nowrap;transform:scaleY(1.13)">EPSG:4326</div>
<svg class="a" style="left:1033px;top:801px" width="18" height="16"><path d="M8.500 1C13 1 16.500 3.500 16.500 7S13 13 8.500 13C7.800 13 7 12.900 6.300 12.800 5.300 14 3.500 15 1.800 15 3 14 3.500 12.800 3.400 11.600 1.600 10.500 .5 8.800 .5 7 .5 3.500 4 1 8.500 1Z" fill="#6a6a6a"/></svg>
<svg class="a" style="left:1066px;top:809px" width="12" height="12"><path d="M10 1h1.200v1.200h-1.200zM13 4h1.200v1.200h-1.200zM10 4h1.200v1.200h-1.200zM16 7h1.200v1.200h-1.200zM13 7h1.200v1.200h-1.200zM10 7h1.200v1.200h-1.200zM19 10h1.200v1.200h-1.200zM16 10h1.200v1.200h-1.200zM13 10h1.200v1.200h-1.200zM10 10h1.200v1.200h-1.200z" fill="#a8a8a8"/></svg>
<div class="a" style="left:1079px;top:0;width:1px;height:823px;background:#6e6e6e"></div>
<div class="a" style="left:219px;top:158px;width:857px;height:641px;border:2px solid #fe0000"></div>
<svg class="a" style="left:0;top:0" width="1084" height="825"><path d="M50.1 757.5L66.7 733.8L83.4 710.0L100.9 685.7L134.8 638.6L174.7 583.5L200.2 547.7L200.4 540.7L215.2 532.8L210.8 551.2L205.6 551.6L179.2 586.8L138.7 641.5L104.2 688.1L86.2 712.1L68.7 735.2L51.1 758.3Z" fill="#fe0000"/></svg>
<svg class="a" style="left:539.5px;top:513px" width="60" height="20" viewBox="0 -15.200 60 20"><text class="cj" x="0" y="0" font-size="14" font-weight="bold" fill="#fff" stroke="#fff" stroke-width="3.400" stroke-linejoin="round">打印范围</text><text class="cj" x="0" y="0" font-size="14" font-weight="bold" fill="#f00000">打印范围</text></svg>
</body></html>
